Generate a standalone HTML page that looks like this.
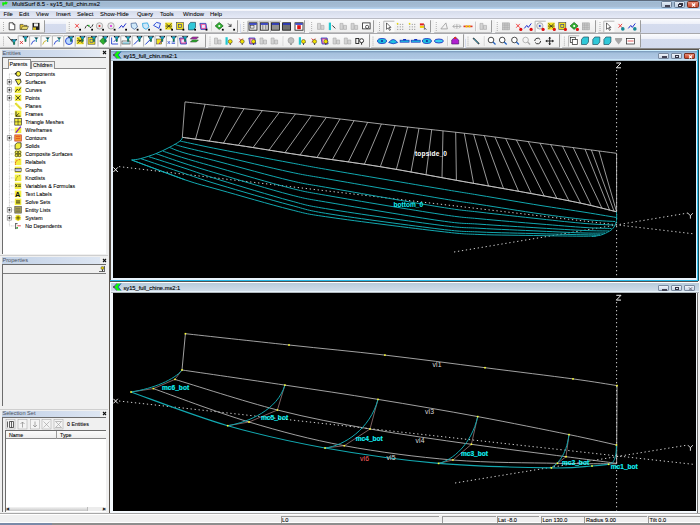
<!DOCTYPE html>
<html><head><meta charset="utf-8">
<style>
*{box-sizing:border-box}
html,body{margin:0;padding:0}
body{width:700px;height:525px;overflow:hidden;position:relative;background:#f0f0f0;font-family:"Liberation Sans",sans-serif;color:#000}
.a{position:absolute}
.t{position:absolute;white-space:nowrap;line-height:1}
</style></head><body>
<!-- title bar -->
<div class="a" style="left:0;top:0;width:700px;height:9px;background:linear-gradient(#5d6b7e 0,#5d6b7e 1px,#a9c6e3 1px,#9fb7cf 2px,#a6bdd6 7px,#b4d2ef 8px,#b4d2ef 9px)"></div>
<svg class="a" style="left:0;top:0" width="10" height="8" viewBox="0 0 10 8"><path d="M1.9,2.1 L5,2.1 L5.2,0.9 L8.2,2.5 L6.6,4.7 L4.2,4.7 L3.5,6.5 L2.1,5.6 Z" fill="#08f008" stroke="#e0a0f0" stroke-width="0.45"/></svg>
<div class="t" style="left:12px;top:1.6px;font-size:5.87px;color:#000;-webkit-text-stroke:0.07px #000">MultiSurf 8.5 - sy15_full_chin.ms2</div>
<!-- window buttons -->
<div class="a" style="left:661px;top:1px;width:11px;height:6.5px;border:0.6px solid #6a7e96;border-radius:1.5px;background:linear-gradient(#e4ecf6,#bccde0)"><div class="a" style="left:3px;top:3.4px;width:5px;height:2px;background:#fff;border:0.45px solid #445"></div></div>
<div class="a" style="left:674px;top:1px;width:11px;height:6.5px;border:0.6px solid #6a7e96;border-radius:1.5px;background:linear-gradient(#e4ecf6,#bccde0)"><div class="a" style="left:4px;top:0.8px;width:4px;height:3px;border:0.6px solid #334;background:#f4f8fc"></div><div class="a" style="left:2.8px;top:2.3px;width:4px;height:3px;border:0.6px solid #334;background:#f4f8fc"></div></div>
<div class="a" style="left:687px;top:1px;width:11.5px;height:6.5px;border:0.6px solid #7a3020;border-radius:1.5px;background:linear-gradient(#e8907a,#c8452a)"><svg class="a" style="left:0;top:0" width="11" height="6.5" viewBox="0 0 11 6.5"><path d="M4,1.5 L7.2,4.7 M7.2,1.5 L4,4.7" stroke="#fff" stroke-width="1.2"/></svg></div>
<!-- menu bar -->
<div class="a" style="left:0;top:9px;width:700px;height:10px;background:linear-gradient(#fafbff 0,#f7f8fd 1.4px,#d6dcec 2.2px,#dce2f0 5px,#e4e8f6 8.4px,#e8ebf8 9px,#b8bac2 9.1px)"></div>
<div class="t" style="top:12.3px;font-size:5.9px;color:#000;-webkit-text-stroke:0.05px #000;left:3.4px">File</div>
<div class="t" style="top:12.3px;font-size:5.9px;color:#000;-webkit-text-stroke:0.05px #000;left:19px">Edit</div>
<div class="t" style="top:12.3px;font-size:5.9px;color:#000;-webkit-text-stroke:0.05px #000;left:36px">View</div>
<div class="t" style="top:12.3px;font-size:5.9px;color:#000;-webkit-text-stroke:0.05px #000;left:56px">Insert</div>
<div class="t" style="top:12.3px;font-size:5.9px;color:#000;-webkit-text-stroke:0.05px #000;left:77px">Select</div>
<div class="t" style="top:12.3px;font-size:5.9px;color:#000;-webkit-text-stroke:0.05px #000;left:100px">Show-Hide</div>
<div class="t" style="top:12.3px;font-size:5.9px;color:#000;-webkit-text-stroke:0.05px #000;left:137px">Query</div>
<div class="t" style="top:12.3px;font-size:5.9px;color:#000;-webkit-text-stroke:0.05px #000;left:160px">Tools</div>
<div class="t" style="top:12.3px;font-size:5.9px;color:#000;-webkit-text-stroke:0.05px #000;left:183px">Window</div>
<div class="t" style="top:12.3px;font-size:5.9px;color:#000;-webkit-text-stroke:0.05px #000;left:210px">Help</div>
<!-- rebar -->
<div class="a" style="left:0;top:19px;width:700px;height:14.6px;background:linear-gradient(#fbfcfe 0,#eff1f9 4.5px,#d5dcee 5.2px,#d3daed 14px,#a8a8ac 14px)"></div><div class="a" style="left:0;top:33.6px;width:700px;height:14.4px;background:linear-gradient(#fbfcfe 0,#eff1f9 4.5px,#d5dcee 5.2px,#d3daed 14px)"></div>
<div class="a" style="left:0;top:48px;width:700px;height:1px;background:#8a8a8a"></div>
<div class="a" style="left:0px;top:19.6px;width:44.8px;height:13.600000000000001px;background:linear-gradient(#fafafa,#f4f4f4 50%,#eeeeee);border-right:0.9px solid #9c9c9c;border-bottom:0.7px solid #c0c0c0;border-radius:1px"></div>
<div class="a" style="left:237.8px;top:19.6px;width:2.6999999999999886px;height:13.600000000000001px;background:#f2f2f2"></div>
<div class="a" style="left:66px;top:19.6px;width:171.8px;height:13.600000000000001px;background:linear-gradient(#fafafa,#f4f4f4 50%,#eeeeee);border-right:0.9px solid #9c9c9c;border-bottom:0.7px solid #c0c0c0;border-radius:1px"></div>
<div class="a" style="left:305px;top:19.6px;width:3.5px;height:13.600000000000001px;background:#f2f2f2"></div>
<div class="a" style="left:240.5px;top:19.6px;width:64.5px;height:13.600000000000001px;background:linear-gradient(#fafafa,#f4f4f4 50%,#eeeeee);border-right:0.9px solid #9c9c9c;border-bottom:0.7px solid #c0c0c0;border-radius:1px"></div>
<div class="a" style="left:374px;top:19.6px;width:2.5px;height:13.600000000000001px;background:#f2f2f2"></div>
<div class="a" style="left:308.5px;top:19.6px;width:65.5px;height:13.600000000000001px;background:linear-gradient(#fafafa,#f4f4f4 50%,#eeeeee);border-right:0.9px solid #9c9c9c;border-bottom:0.7px solid #c0c0c0;border-radius:1px"></div>
<div class="a" style="left:431px;top:19.6px;width:2.5px;height:13.600000000000001px;background:#f2f2f2"></div>
<div class="a" style="left:376.5px;top:19.6px;width:54.5px;height:13.600000000000001px;background:linear-gradient(#fafafa,#f4f4f4 50%,#eeeeee);border-right:0.9px solid #9c9c9c;border-bottom:0.7px solid #c0c0c0;border-radius:1px"></div>
<div class="a" style="left:491.5px;top:19.6px;width:3.0px;height:13.600000000000001px;background:#f2f2f2"></div>
<div class="a" style="left:433.5px;top:19.6px;width:58.0px;height:13.600000000000001px;background:linear-gradient(#fafafa,#f4f4f4 50%,#eeeeee);border-right:0.9px solid #9c9c9c;border-bottom:0.7px solid #c0c0c0;border-radius:1px"></div>
<div class="a" style="left:595.5px;top:19.6px;width:2.0px;height:13.600000000000001px;background:#f2f2f2"></div>
<div class="a" style="left:494.5px;top:19.6px;width:101.0px;height:13.600000000000001px;background:linear-gradient(#fafafa,#f4f4f4 50%,#eeeeee);border-right:0.9px solid #9c9c9c;border-bottom:0.7px solid #c0c0c0;border-radius:1px"></div>
<div class="a" style="left:597.5px;top:19.6px;width:43.0px;height:13.600000000000001px;background:linear-gradient(#fafafa,#f4f4f4 50%,#eeeeee);border-right:0.9px solid #9c9c9c;border-bottom:0.7px solid #c0c0c0;border-radius:1px"></div>
<div class="a" style="left:206px;top:34.2px;width:1.5px;height:13.599999999999994px;background:#f2f2f2"></div>
<div class="a" style="left:0px;top:34.2px;width:206px;height:13.599999999999994px;background:linear-gradient(#fafafa,#f4f4f4 50%,#eeeeee);border-right:0.9px solid #9c9c9c;border-bottom:0.7px solid #c0c0c0;border-radius:1px"></div>
<div class="a" style="left:369.5px;top:34.2px;width:1.0px;height:13.599999999999994px;background:#f2f2f2"></div>
<div class="a" style="left:207.5px;top:34.2px;width:162.0px;height:13.599999999999994px;background:linear-gradient(#fafafa,#f4f4f4 50%,#eeeeee);border-right:0.9px solid #9c9c9c;border-bottom:0.7px solid #c0c0c0;border-radius:1px"></div>
<div class="a" style="left:463.8px;top:34.2px;width:1.6999999999999886px;height:13.599999999999994px;background:#f2f2f2"></div>
<div class="a" style="left:370.5px;top:34.2px;width:93.30000000000001px;height:13.599999999999994px;background:linear-gradient(#fafafa,#f4f4f4 50%,#eeeeee);border-right:0.9px solid #9c9c9c;border-bottom:0.7px solid #c0c0c0;border-radius:1px"></div>
<div class="a" style="left:559.5px;top:34.2px;width:2.0px;height:13.599999999999994px;background:#f2f2f2"></div>
<div class="a" style="left:465.5px;top:34.2px;width:94.0px;height:13.599999999999994px;background:linear-gradient(#fafafa,#f4f4f4 50%,#eeeeee);border-right:0.9px solid #9c9c9c;border-bottom:0.7px solid #c0c0c0;border-radius:1px"></div>
<div class="a" style="left:561.5px;top:34.2px;width:79.0px;height:13.599999999999994px;background:linear-gradient(#fafafa,#f4f4f4 50%,#eeeeee);border-right:0.9px solid #9c9c9c;border-bottom:0.7px solid #c0c0c0;border-radius:1px"></div>
<svg class="a" style="left:0;top:0" width="700" height="49" viewBox="0 0 700 49" font-family="Liberation Sans"><rect x="3.0" y="22.1" width="0.8" height="0.8" fill="#8a8a8a"/><rect x="3.0" y="24.1" width="0.8" height="0.8" fill="#8a8a8a"/><rect x="3.0" y="26.1" width="0.8" height="0.8" fill="#8a8a8a"/><rect x="3.0" y="28.1" width="0.8" height="0.8" fill="#8a8a8a"/><rect x="3.0" y="30.1" width="0.8" height="0.8" fill="#8a8a8a"/><rect x="68.8" y="22.1" width="0.8" height="0.8" fill="#8a8a8a"/><rect x="68.8" y="24.1" width="0.8" height="0.8" fill="#8a8a8a"/><rect x="68.8" y="26.1" width="0.8" height="0.8" fill="#8a8a8a"/><rect x="68.8" y="28.1" width="0.8" height="0.8" fill="#8a8a8a"/><rect x="68.8" y="30.1" width="0.8" height="0.8" fill="#8a8a8a"/><rect x="243.4" y="22.1" width="0.8" height="0.8" fill="#8a8a8a"/><rect x="243.4" y="24.1" width="0.8" height="0.8" fill="#8a8a8a"/><rect x="243.4" y="26.1" width="0.8" height="0.8" fill="#8a8a8a"/><rect x="243.4" y="28.1" width="0.8" height="0.8" fill="#8a8a8a"/><rect x="243.4" y="30.1" width="0.8" height="0.8" fill="#8a8a8a"/><rect x="311.3" y="22.1" width="0.8" height="0.8" fill="#8a8a8a"/><rect x="311.3" y="24.1" width="0.8" height="0.8" fill="#8a8a8a"/><rect x="311.3" y="26.1" width="0.8" height="0.8" fill="#8a8a8a"/><rect x="311.3" y="28.1" width="0.8" height="0.8" fill="#8a8a8a"/><rect x="311.3" y="30.1" width="0.8" height="0.8" fill="#8a8a8a"/><rect x="379.1" y="22.1" width="0.8" height="0.8" fill="#8a8a8a"/><rect x="379.1" y="24.1" width="0.8" height="0.8" fill="#8a8a8a"/><rect x="379.1" y="26.1" width="0.8" height="0.8" fill="#8a8a8a"/><rect x="379.1" y="28.1" width="0.8" height="0.8" fill="#8a8a8a"/><rect x="379.1" y="30.1" width="0.8" height="0.8" fill="#8a8a8a"/><rect x="435.8" y="22.1" width="0.8" height="0.8" fill="#8a8a8a"/><rect x="435.8" y="24.1" width="0.8" height="0.8" fill="#8a8a8a"/><rect x="435.8" y="26.1" width="0.8" height="0.8" fill="#8a8a8a"/><rect x="435.8" y="28.1" width="0.8" height="0.8" fill="#8a8a8a"/><rect x="435.8" y="30.1" width="0.8" height="0.8" fill="#8a8a8a"/><rect x="496.8" y="22.1" width="0.8" height="0.8" fill="#8a8a8a"/><rect x="496.8" y="24.1" width="0.8" height="0.8" fill="#8a8a8a"/><rect x="496.8" y="26.1" width="0.8" height="0.8" fill="#8a8a8a"/><rect x="496.8" y="28.1" width="0.8" height="0.8" fill="#8a8a8a"/><rect x="496.8" y="30.1" width="0.8" height="0.8" fill="#8a8a8a"/><rect x="599.6" y="22.1" width="0.8" height="0.8" fill="#8a8a8a"/><rect x="599.6" y="24.1" width="0.8" height="0.8" fill="#8a8a8a"/><rect x="599.6" y="26.1" width="0.8" height="0.8" fill="#8a8a8a"/><rect x="599.6" y="28.1" width="0.8" height="0.8" fill="#8a8a8a"/><rect x="599.6" y="30.1" width="0.8" height="0.8" fill="#8a8a8a"/><rect x="3.0" y="36.7" width="0.8" height="0.8" fill="#8a8a8a"/><rect x="3.0" y="38.7" width="0.8" height="0.8" fill="#8a8a8a"/><rect x="3.0" y="40.7" width="0.8" height="0.8" fill="#8a8a8a"/><rect x="3.0" y="42.7" width="0.8" height="0.8" fill="#8a8a8a"/><rect x="3.0" y="44.7" width="0.8" height="0.8" fill="#8a8a8a"/><rect x="209.6" y="36.7" width="0.8" height="0.8" fill="#8a8a8a"/><rect x="209.6" y="38.7" width="0.8" height="0.8" fill="#8a8a8a"/><rect x="209.6" y="40.7" width="0.8" height="0.8" fill="#8a8a8a"/><rect x="209.6" y="42.7" width="0.8" height="0.8" fill="#8a8a8a"/><rect x="209.6" y="44.7" width="0.8" height="0.8" fill="#8a8a8a"/><rect x="372.6" y="36.7" width="0.8" height="0.8" fill="#8a8a8a"/><rect x="372.6" y="38.7" width="0.8" height="0.8" fill="#8a8a8a"/><rect x="372.6" y="40.7" width="0.8" height="0.8" fill="#8a8a8a"/><rect x="372.6" y="42.7" width="0.8" height="0.8" fill="#8a8a8a"/><rect x="372.6" y="44.7" width="0.8" height="0.8" fill="#8a8a8a"/><rect x="467.6" y="36.7" width="0.8" height="0.8" fill="#8a8a8a"/><rect x="467.6" y="38.7" width="0.8" height="0.8" fill="#8a8a8a"/><rect x="467.6" y="40.7" width="0.8" height="0.8" fill="#8a8a8a"/><rect x="467.6" y="42.7" width="0.8" height="0.8" fill="#8a8a8a"/><rect x="467.6" y="44.7" width="0.8" height="0.8" fill="#8a8a8a"/><rect x="563.9" y="36.7" width="0.8" height="0.8" fill="#8a8a8a"/><rect x="563.9" y="38.7" width="0.8" height="0.8" fill="#8a8a8a"/><rect x="563.9" y="40.7" width="0.8" height="0.8" fill="#8a8a8a"/><rect x="563.9" y="42.7" width="0.8" height="0.8" fill="#8a8a8a"/><rect x="563.9" y="44.7" width="0.8" height="0.8" fill="#8a8a8a"/><path d="M9.2,22.799999999999997 h3.8 l1.8,1.8 v5.2 h-5.6 z" fill="#fff" stroke="#222" stroke-width="0.8"/><path d="M13,22.799999999999997 v1.8 h1.8" fill="none" stroke="#222" stroke-width="0.6"/><path d="M20,24.4 h3 l1,1 h3 v4 h-7 z" fill="#e0c030" stroke="#333" stroke-width="0.6"/><path d="M21,29.4 l1.5,-3 h6 l-1.5,3 z" fill="#f0e070" stroke="#333" stroke-width="0.5"/><rect x="32.5" y="22.9" width="7" height="7" fill="#222"/><rect x="34" y="23.4" width="4" height="3" fill="#eee"/><rect x="33" y="27.4" width="3" height="2.5" fill="#d8c020"/><path d="M75.2,23.9 l3.6,3.8 M78.8,23.9 l-3.6,3.8" stroke="#f03030" stroke-width="0.9"/><rect x="79.2" y="28.8" width="1.8" height="1.8" fill="#000"/><path d="M85,28.4 q2,-5 4,-2 t4,-2" fill="none" stroke="#222" stroke-width="0.9"/><rect x="88" y="24.9" width="1.5" height="1.5" fill="#20c020"/><rect x="91.2" y="28.8" width="1.8" height="1.8" fill="#000"/><circle cx="99.5" cy="25.9" r="3.2" fill="#e8e8e8" stroke="#888" stroke-width="0.6"/><circle cx="99.5" cy="25.9" r="1" fill="#e02020"/><rect x="102.2" y="28.8" width="1.8" height="1.8" fill="#000"/><circle cx="111.0" cy="25.9" r="3.2" fill="#e8e8e8" stroke="#888" stroke-width="0.6"/><circle cx="111.0" cy="25.9" r="1" fill="#e020e0"/><rect x="113.7" y="28.8" width="1.8" height="1.8" fill="#000"/><path d="M119,28.4 l2.5,-3 l1.5,2 l3,-4" fill="none" stroke="#2030d0" stroke-width="1"/><rect x="125.2" y="28.8" width="1.8" height="1.8" fill="#000"/><path d="M131.0,23.4 l5,-0.5 l1.5,4 l-3,2.5 l-3,-2 z" fill="#cfe8f8" stroke="#5070a0" stroke-width="0.8"/><rect x="136.7" y="28.8" width="1.8" height="1.8" fill="#000"/><path d="M142.5,23.4 l5,-0.5 l1.5,4 l-3,2.5 l-3,-2 z" fill="#cfe8f8" stroke="#20a0e0" stroke-width="0.8"/><rect x="148.2" y="28.8" width="1.8" height="1.8" fill="#000"/><path d="M153.5,25.4 l3,-3 l4,1 l-1.5,5 z" fill="#e8f0ff" stroke="#2040d0" stroke-width="0.9"/><rect x="159.7" y="28.8" width="1.8" height="1.8" fill="#000"/><rect x="165.2" y="22.599999999999998" width="7" height="7" fill="#f0e020"/><path d="M166,23.4 l5.5,5.5 M171.5,23.4 l-5.5,5.5 M165.5,26.099999999999998 h6.5" stroke="#222" stroke-width="0.7"/><rect x="171.2" y="28.8" width="1.8" height="1.8" fill="#000"/><rect x="176.5" y="22.599999999999998" width="7" height="7" fill="#f0e020" stroke="#444" stroke-width="0.6"/><rect x="178.5" y="24.599999999999998" width="3" height="3" fill="none" stroke="#2030a0" stroke-width="0.6"/><rect x="182.5" y="28.8" width="1.8" height="1.8" fill="#000"/><path d="M188.5,24.9 l2,-2.5 h5 v5 l-2,2.5 h-5 z" fill="#30c8d8" stroke="#205060" stroke-width="0.7"/><rect x="194.2" y="28.8" width="1.8" height="1.8" fill="#000"/><path d="M199.9,23.4 h6 l1,6 h-6 z" fill="#f060a0" stroke="#2040c0" stroke-width="0.8"/><rect x="201.9" y="24.9" width="3" height="3" fill="#e8e8ff"/><rect x="205.6" y="28.8" width="1.8" height="1.8" fill="#000"/><rect x="211.6" y="21.6" width="0.7" height="9.6" fill="#b0b0b0"/><rect x="212.3" y="21.6" width="0.6" height="9.6" fill="#ffffff"/><path d="M219.2,22.4 l4,3.5 l-4,3.5 l-4,-3.5 z" fill="#30b030" stroke="#1a5a1a" stroke-width="0.7"/><rect x="218.39999999999998" y="25.099999999999998" width="1.8" height="1.8" fill="#fff"/><rect x="221.9" y="28.8" width="1.8" height="1.8" fill="#000"/><path d="M228,23.4 l3,3 M231,26.4 h-2.5 M231,26.4 v-2.5" fill="none" stroke="#222" stroke-width="0.8"/><rect x="233.2" y="28.8" width="1.8" height="1.8" fill="#000"/><rect x="247.4" y="20.8" width="11" height="11.2" fill="#fafafa"/><path d="M247.8,32.0 V21.2 H258.4" fill="none" stroke="#b4b4b4" stroke-width="1"/><rect x="249" y="22.799999999999997" width="8" height="7.4" fill="#e8e8e8" stroke="#111" stroke-width="0.8"/><rect x="249.4" y="23.2" width="7.2" height="1.6" fill="#2030c0"/><rect x="250.5" y="25.599999999999998" width="3.5" height="2.5" fill="none" stroke="#222" stroke-width="0.5"/><rect x="258.7" y="20.8" width="11" height="11.2" fill="#fafafa"/><path d="M259.1,32.0 V21.2 H269.7" fill="none" stroke="#b4b4b4" stroke-width="1"/><rect x="260.3" y="22.799999999999997" width="8" height="7.4" fill="#d8d8d8" stroke="#111" stroke-width="0.8"/><rect x="260.7" y="23.2" width="7.2" height="1.6" fill="#2030c0"/><path d="M262.8,25.099999999999998 v4.5 M265.8,25.099999999999998 v4.5" stroke="#444" stroke-width="0.6"/><rect x="269.9" y="20.8" width="11" height="11.2" fill="#fafafa"/><path d="M270.3,32.0 V21.2 H280.9" fill="none" stroke="#b4b4b4" stroke-width="1"/><rect x="271.5" y="22.799999999999997" width="8" height="7.4" fill="#909090" stroke="#111" stroke-width="0.8"/><rect x="271.9" y="23.2" width="7.2" height="1.6" fill="#2030c0"/><rect x="282.6" y="22.799999999999997" width="8" height="7.4" fill="#707070" stroke="#111" stroke-width="0.8"/><rect x="283.0" y="23.2" width="7.2" height="1.6" fill="#2030c0"/><rect x="295" y="22.799999999999997" width="8" height="7.4" fill="#fff" stroke="#111" stroke-width="0.8"/><rect x="295.4" y="23.2" width="7.2" height="1.6" fill="#2030c0"/><rect x="297.2" y="25.2" width="3.6" height="4" fill="#e01010"/><path d="M317.5,23.4 h3 v6 h-3 z M321,25.4 h3 v4 h-3 z" fill="#d4d4d4" stroke="#a8a8a8" stroke-width="0.6"/><rect x="328.8" y="22.599999999999998" width="2.2" height="7.5" fill="#20c8d0"/><path d="M332.3,25.4 l3,3" stroke="#222" stroke-width="0.9"/><path d="M340.0,23.4 h3 v6 h-3 z M343.5,25.4 h3 v4 h-3 z" fill="#d4d4d4" stroke="#a8a8a8" stroke-width="0.6"/><path d="M351.1,23.4 h3 v6 h-3 z M354.6,25.4 h3 v4 h-3 z" fill="#d4d4d4" stroke="#a8a8a8" stroke-width="0.6"/><rect x="362.6" y="22.9" width="7.5" height="6" fill="#fff" stroke="#222" stroke-width="0.8"/><circle cx="367.1" cy="26.9" r="1.6" fill="none" stroke="#222" stroke-width="0.7"/><rect x="383.4" y="20.8" width="11" height="11.2" fill="#fafafa"/><path d="M383.8,32.0 V21.2 H394.4" fill="none" stroke="#b4b4b4" stroke-width="1"/><path d="M386.5,22.9 v6.5 l1.5,-1.5 l1.5,2.5 l1,-0.5 l-1.5,-2.5 h2 z" fill="#fff" stroke="#111" stroke-width="0.6"/><rect x="397.3" y="23.9" width="0.9" height="0.9" fill="#777"/><rect x="397.3" y="26.4" width="0.9" height="0.9" fill="#777"/><rect x="397.3" y="28.9" width="0.9" height="0.9" fill="#777"/><rect x="399.8" y="23.9" width="0.9" height="0.9" fill="#777"/><rect x="399.8" y="26.4" width="0.9" height="0.9" fill="#777"/><rect x="399.8" y="28.9" width="0.9" height="0.9" fill="#777"/><rect x="402.3" y="23.9" width="0.9" height="0.9" fill="#777"/><rect x="402.3" y="26.4" width="0.9" height="0.9" fill="#777"/><rect x="402.3" y="28.9" width="0.9" height="0.9" fill="#777"/><rect x="396.8" y="22.9" width="1.5" height="1.5" fill="#f0e000"/><rect x="409.3" y="23.9" width="0.9" height="0.9" fill="#777"/><rect x="409.3" y="26.4" width="0.9" height="0.9" fill="#777"/><rect x="409.3" y="28.9" width="0.9" height="0.9" fill="#777"/><rect x="411.8" y="23.9" width="0.9" height="0.9" fill="#777"/><rect x="411.8" y="26.4" width="0.9" height="0.9" fill="#777"/><rect x="411.8" y="28.9" width="0.9" height="0.9" fill="#777"/><rect x="414.3" y="23.9" width="0.9" height="0.9" fill="#777"/><rect x="414.3" y="26.4" width="0.9" height="0.9" fill="#777"/><rect x="414.3" y="28.9" width="0.9" height="0.9" fill="#777"/><rect x="408.8" y="22.9" width="1.5" height="1.5" fill="#f0e000"/><rect x="419.9" y="23.4" width="4" height="2" fill="#e02020"/><rect x="419.9" y="25.9" width="4" height="2" fill="#f0d000"/><path d="M424.4,24.4 v5 l1,-1 l1,1.5" fill="none" stroke="#222" stroke-width="0.6"/><path d="M440.9,28.9 l5,-6 l1.5,6 z" fill="none" stroke="#9a9a9a" stroke-width="0.8"/><path d="M452.9,26.4 h8 M452.9,26.4 l2,-2 M452.9,26.4 l2,2 M460.9,26.4 l-2,-2 M460.9,26.4 l-2,2 M456.9,23.9 v5" stroke="#9a9a9a" stroke-width="0.7" fill="none"/><rect x="463.5" y="25.599999999999998" width="9" height="1.6" fill="#e03030"/><circle cx="466.5" cy="26.4" r="1.1" fill="#f0d000"/><circle cx="469.5" cy="26.4" r="1.1" fill="#f0d000"/><rect x="475.4" y="21.6" width="0.7" height="9.6" fill="#b0b0b0"/><rect x="476.1" y="21.6" width="0.6" height="9.6" fill="#ffffff"/><path d="M480.0,23.4 h3 v6 h-3 z M483.5,25.4 h3 v4 h-3 z" fill="#d4d4d4" stroke="#a8a8a8" stroke-width="0.6"/><rect x="502.5" y="22.9" width="7" height="7" fill="#c8c8c8" stroke="#9a9a9a" stroke-width="0.5"/><path d="M504.8,22.9 v7 M507.2,22.9 v7 M502.5,25.2 h7 M502.5,27.599999999999998 h7" stroke="#a0a0a0" stroke-width="0.4"/><path d="M516.2,23.9 l3.6,3.8 M519.8,23.9 l-3.6,3.8" stroke="#f03030" stroke-width="0.9"/><circle cx="520.8" cy="29.4" r="1.6" fill="#e01010"/><path d="M524.3,28.4 l2.5,-3 l1.5,2 l3,-4" fill="none" stroke="#2030d0" stroke-width="1"/><circle cx="531.0999999999999" cy="29.4" r="1.6" fill="#e01010"/><rect x="534.7" y="20.8" width="11" height="11.2" fill="#fafafa"/><path d="M535.1,32.0 V21.2 H545.7" fill="none" stroke="#b4b4b4" stroke-width="1"/><circle cx="539.8" cy="25.9" r="3.2" fill="#e8e8e8" stroke="#888" stroke-width="0.6"/><circle cx="539.8" cy="25.9" r="1" fill="#2040d0"/><circle cx="543.0999999999999" cy="29.4" r="1.6" fill="#e01010"/><rect x="547.7" y="22.599999999999998" width="7" height="7" fill="#f0e020"/><path d="M548.5,23.4 l5.5,5.5 M554.0,23.4 l-5.5,5.5 M548.0,26.099999999999998 h6.5" stroke="#222" stroke-width="0.7"/><circle cx="554.3" cy="29.4" r="1.6" fill="#e01010"/><rect x="558.8000000000001" y="22.599999999999998" width="7" height="7" fill="#f0e020" stroke="#444" stroke-width="0.6"/><rect x="560.8000000000001" y="24.599999999999998" width="3" height="3" fill="none" stroke="#2030a0" stroke-width="0.6"/><circle cx="565.4" cy="29.4" r="1.6" fill="#e01010"/><path d="M574.1,22.4 l4,3.5 l-4,3.5 l-4,-3.5 z" fill="#30b030" stroke="#1a5a1a" stroke-width="0.7"/><rect x="573.3000000000001" y="25.099999999999998" width="1.8" height="1.8" fill="#fff"/><circle cx="577.4" cy="29.4" r="1.6" fill="#e01010"/><rect x="582.3" y="22.9" width="7" height="7" fill="#c8c8c8" stroke="#9a9a9a" stroke-width="0.5"/><path d="M584.5999999999999,22.9 v7 M587.0,22.9 v7 M582.3,25.2 h7 M582.3,27.599999999999998 h7" stroke="#a0a0a0" stroke-width="0.4"/><rect x="603.4" y="20.8" width="11" height="11.2" fill="#fafafa"/><path d="M603.8,32.0 V21.2 H614.4" fill="none" stroke="#b4b4b4" stroke-width="1"/><path d="M606.5,22.9 v6.5 l1.5,-1.5 l1.5,2.5 l1,-0.5 l-1.5,-2.5 h2 z" fill="#fff" stroke="#111" stroke-width="0.6"/><path d="M618.5,23.9 l3.6,3.8 M622.0999999999999,23.9 l-3.6,3.8" stroke="#f03030" stroke-width="0.9"/><circle cx="622.8" cy="28.9" r="1.8" fill="#188898"/><path d="M628.3,28.4 l2.5,-3 l1.5,2 l3,-4" fill="none" stroke="#2030d0" stroke-width="1"/><circle cx="634.8" cy="28.9" r="1.8" fill="#188898"/><path d="M8,36.5 l5,6" stroke="#222" stroke-width="0.8"/><path d="M11.8,39.6 h4.6 l-1.7,2.4 v2.4 h-1.2 v-2.4 z" fill="#10b0c8" stroke="#102040" stroke-width="0.45"/><rect x="13.5" y="42.0" width="1.2" height="2.4" fill="#108040"/><circle cx="11.9" cy="39.7" r="0.6" fill="#000"/><circle cx="16.3" cy="39.7" r="0.6" fill="#000"/><rect x="17.8" y="35.4" width="11" height="11.2" fill="#fafafa"/><path d="M18.2,46.6 V35.8 H28.8" fill="none" stroke="#b4b4b4" stroke-width="1"/><path d="M19.9,41.0 l3,3 M22.9,41.0 l-3,3" stroke="#e02020" stroke-width="0.8"/><path d="M23.2,36.6 h4.6 l-1.7,2.4 v2.4 h-1.2 v-2.4 z" fill="#10b0c8" stroke="#102040" stroke-width="0.45"/><rect x="24.9" y="39.0" width="1.2" height="2.4" fill="#108040"/><circle cx="23.299999999999997" cy="36.7" r="0.6" fill="#000"/><circle cx="27.7" cy="36.7" r="0.6" fill="#000"/><rect x="29.2" y="35.4" width="11" height="11.2" fill="#fafafa"/><path d="M29.6,46.6 V35.8 H40.2" fill="none" stroke="#b4b4b4" stroke-width="1"/><path d="M31.299999999999997,44.5 q1,-4 4,-4" fill="none" stroke="#2040d0" stroke-width="0.9"/><path d="M34.8,37.5 l1.5,2 l1.5,-2 M36.3,39.5 v2.5" stroke="#188898" stroke-width="1"/><rect x="40.6" y="35.4" width="11" height="11.2" fill="#fafafa"/><path d="M41.0,46.6 V35.8 H51.6" fill="none" stroke="#b4b4b4" stroke-width="1"/><path d="M42.7,44.5 q1,-4 4,-4" fill="none" stroke="#c0b020" stroke-width="0.9"/><path d="M46.2,37.5 l1.5,2 l1.5,-2 M47.7,39.5 v2.5" stroke="#188898" stroke-width="1"/><rect x="52.0" y="35.4" width="11" height="11.2" fill="#fafafa"/><path d="M52.4,46.6 V35.8 H63.0" fill="none" stroke="#b4b4b4" stroke-width="1"/><path d="M54.1,44.5 q1,-4 4,-4" fill="none" stroke="#2040d0" stroke-width="0.9"/><path d="M57.6,37.5 l1.5,2 l1.5,-2 M59.1,39.5 v2.5" stroke="#188898" stroke-width="1"/><rect x="63.4" y="35.4" width="11" height="11.2" fill="#fafafa"/><path d="M63.8,46.6 V35.8 H74.4" fill="none" stroke="#b4b4b4" stroke-width="1"/><circle cx="69" cy="41.0" r="3.5" fill="#b8d8ff" stroke="#2040d0" stroke-width="0.9"/><path d="M68.8,36.6 h4.6 l-1.7,2.4 v2.4 h-1.2 v-2.4 z" fill="#10b0c8" stroke="#102040" stroke-width="0.45"/><rect x="70.5" y="39.0" width="1.2" height="2.4" fill="#108040"/><circle cx="68.9" cy="36.7" r="0.6" fill="#000"/><circle cx="73.3" cy="36.7" r="0.6" fill="#000"/><rect x="74.8" y="35.4" width="11" height="11.2" fill="#fafafa"/><path d="M75.2,46.6 V35.8 H85.8" fill="none" stroke="#b4b4b4" stroke-width="1"/><rect x="76.60000000000001" y="37.2" width="7" height="7" fill="#f0e020"/><path d="M77.4,38.0 l5.5,5.5 M82.9,38.0 l-5.5,5.5 M76.9,40.7 h6.5" stroke="#222" stroke-width="0.7"/><path d="M80.2,36.6 h4.6 l-1.7,2.4 v2.4 h-1.2 v-2.4 z" fill="#10b0c8" stroke="#102040" stroke-width="0.45"/><rect x="81.9" y="39.0" width="1.2" height="2.4" fill="#108040"/><circle cx="80.30000000000001" cy="36.7" r="0.6" fill="#000"/><circle cx="84.7" cy="36.7" r="0.6" fill="#000"/><rect x="86.2" y="35.4" width="11" height="11.2" fill="#fafafa"/><path d="M86.6,46.6 V35.8 H97.2" fill="none" stroke="#b4b4b4" stroke-width="1"/><rect x="88.0" y="37.2" width="7" height="7" fill="#f0e020" stroke="#444" stroke-width="0.6"/><rect x="90.0" y="39.2" width="3" height="3" fill="none" stroke="#2030a0" stroke-width="0.6"/><path d="M91.6,36.6 h4.6 l-1.7,2.4 v2.4 h-1.2 v-2.4 z" fill="#10b0c8" stroke="#102040" stroke-width="0.45"/><rect x="93.3" y="39.0" width="1.2" height="2.4" fill="#108040"/><circle cx="91.7" cy="36.7" r="0.6" fill="#000"/><circle cx="96.1" cy="36.7" r="0.6" fill="#000"/><rect x="97.6" y="35.4" width="11" height="11.2" fill="#fafafa"/><path d="M98.0,46.6 V35.8 H108.6" fill="none" stroke="#b4b4b4" stroke-width="1"/><path d="M103.2,37.5 l3.5,3.5 l-3.5,3.5 l-3.5,-3.5 z" fill="#30b030" stroke="#1a5a1a" stroke-width="0.6"/><path d="M103.0,36.6 h4.6 l-1.7,2.4 v2.4 h-1.2 v-2.4 z" fill="#10b0c8" stroke="#102040" stroke-width="0.45"/><rect x="104.7" y="39.0" width="1.2" height="2.4" fill="#108040"/><circle cx="103.10000000000001" cy="36.7" r="0.6" fill="#000"/><circle cx="107.5" cy="36.7" r="0.6" fill="#000"/><rect x="109.0" y="35.4" width="11" height="11.2" fill="#fafafa"/><path d="M109.4,46.6 V35.8 H120.0" fill="none" stroke="#b4b4b4" stroke-width="1"/><path d="M111.6,37.5 v6.5 h6.5" fill="none" stroke="#2040d0" stroke-width="0.9"/><path d="M113.6,42.0 l4,-4" stroke="#2040d0" stroke-width="0.8"/><path d="M114.39999999999999,36.6 h4.6 l-1.7,2.4 v2.4 h-1.2 v-2.4 z" fill="#10b0c8" stroke="#102040" stroke-width="0.45"/><rect x="116.1" y="39.0" width="1.2" height="2.4" fill="#108040"/><circle cx="114.5" cy="36.7" r="0.6" fill="#000"/><circle cx="118.89999999999999" cy="36.7" r="0.6" fill="#000"/><rect x="120.4" y="35.4" width="11" height="11.2" fill="#fafafa"/><path d="M120.8,46.6 V35.8 H131.4" fill="none" stroke="#b4b4b4" stroke-width="1"/><rect x="122" y="41.0" width="8" height="3" fill="#fff" stroke="#333" stroke-width="0.6"/><path d="M123,43.0 h6" stroke="#20a0c0" stroke-width="0.8"/><path d="M125.8,36.6 h4.6 l-1.7,2.4 v2.4 h-1.2 v-2.4 z" fill="#10b0c8" stroke="#102040" stroke-width="0.45"/><rect x="127.5" y="39.0" width="1.2" height="2.4" fill="#108040"/><circle cx="125.9" cy="36.7" r="0.6" fill="#000"/><circle cx="130.3" cy="36.7" r="0.6" fill="#000"/><rect x="131.8" y="35.4" width="11" height="11.2" fill="#fafafa"/><path d="M132.2,46.6 V35.8 H142.8" fill="none" stroke="#b4b4b4" stroke-width="1"/><path d="M133.9,44.5 l6,-6" stroke="#2040d0" stroke-width="1"/><path d="M137.4,37.5 l1.5,2 l1.5,-2" stroke="#188898" stroke-width="0.9" fill="none"/><path d="M137.20000000000002,36.6 h4.6 l-1.7,2.4 v2.4 h-1.2 v-2.4 z" fill="#10b0c8" stroke="#102040" stroke-width="0.45"/><rect x="138.9" y="39.0" width="1.2" height="2.4" fill="#108040"/><circle cx="137.3" cy="36.7" r="0.6" fill="#000"/><circle cx="141.70000000000002" cy="36.7" r="0.6" fill="#000"/><rect x="143.2" y="35.4" width="11" height="11.2" fill="#fafafa"/><path d="M143.6,46.6 V35.8 H154.2" fill="none" stroke="#b4b4b4" stroke-width="1"/><path d="M145.3,44.5 l6,-6" stroke="#2040d0" stroke-width="1"/><path d="M148.8,37.5 l1.5,2 l1.5,-2" stroke="#188898" stroke-width="0.9" fill="none"/><path d="M148.60000000000002,36.6 h4.6 l-1.7,2.4 v2.4 h-1.2 v-2.4 z" fill="#10b0c8" stroke="#102040" stroke-width="0.45"/><rect x="150.3" y="39.0" width="1.2" height="2.4" fill="#108040"/><circle cx="148.70000000000002" cy="36.7" r="0.6" fill="#000"/><circle cx="153.10000000000002" cy="36.7" r="0.6" fill="#000"/><rect x="154.6" y="35.4" width="11" height="11.2" fill="#fafafa"/><path d="M155.0,46.6 V35.8 H165.6" fill="none" stroke="#b4b4b4" stroke-width="1"/><rect x="156.7" y="39.0" width="5" height="5" fill="#f0e020" stroke="#333" stroke-width="0.5"/><path d="M159.2,44.0 l4,-6" stroke="#8020c0" stroke-width="0.9"/><path d="M160.0,36.6 h4.6 l-1.7,2.4 v2.4 h-1.2 v-2.4 z" fill="#10b0c8" stroke="#102040" stroke-width="0.45"/><rect x="161.7" y="39.0" width="1.2" height="2.4" fill="#108040"/><circle cx="160.1" cy="36.7" r="0.6" fill="#000"/><circle cx="164.5" cy="36.7" r="0.6" fill="#000"/><rect x="166.0" y="35.4" width="11" height="11.2" fill="#fafafa"/><path d="M166.4,46.6 V35.8 H177.0" fill="none" stroke="#b4b4b4" stroke-width="1"/><path d="M167.6,41.0 l2.5,3 M170.1,41.0 l-2.5,3 M171.6,42.0 h3.5 M171.6,43.5 h3.5" stroke="#2040d0" stroke-width="0.7"/><path d="M171.4,36.6 h4.6 l-1.7,2.4 v2.4 h-1.2 v-2.4 z" fill="#10b0c8" stroke="#102040" stroke-width="0.45"/><rect x="173.1" y="39.0" width="1.2" height="2.4" fill="#108040"/><circle cx="171.5" cy="36.7" r="0.6" fill="#000"/><circle cx="175.9" cy="36.7" r="0.6" fill="#000"/><rect x="177.4" y="35.4" width="11" height="11.2" fill="#fafafa"/><path d="M177.8,46.6 V35.8 H188.4" fill="none" stroke="#b4b4b4" stroke-width="1"/><path d="M179.5,38.0 h6 l1,6 h-6 z" fill="#f060a0" stroke="#2040c0" stroke-width="0.8"/><rect x="181.5" y="39.5" width="3" height="3" fill="#e8e8ff"/><path d="M182.8,36.6 h4.6 l-1.7,2.4 v2.4 h-1.2 v-2.4 z" fill="#10b0c8" stroke="#102040" stroke-width="0.45"/><rect x="184.5" y="39.0" width="1.2" height="2.4" fill="#108040"/><circle cx="182.9" cy="36.7" r="0.6" fill="#000"/><circle cx="187.3" cy="36.7" r="0.6" fill="#000"/><path d="M190.4,42.0 h6 l2,-2 h-6 z" fill="#30c030" stroke="#222" stroke-width="0.5"/><path d="M190.4,39.0 h6 l2,-2 h-6 z" fill="#c030c0" stroke="#222" stroke-width="0.5"/><path d="M214.5,38.0 h3 v6 h-3 z M218,40.0 h3 v4 h-3 z" fill="#d4d4d4" stroke="#a8a8a8" stroke-width="0.6"/><rect x="225.5" y="37.2" width="2.2" height="7.5" fill="#20c8d0"/><path d="M229,40.0 l3,3" stroke="#222" stroke-width="0.9"/><circle cx="230.2" cy="41.5" r="2" fill="#f0e000" stroke="#333" stroke-width="0.5"/><rect x="229.7" y="43.4" width="1" height="1.5" fill="#333"/><path d="M239.2,38.5 l3.6,3.8 M242.8,38.5 l-3.6,3.8" stroke="#f03030" stroke-width="0.9"/><circle cx="242.2" cy="41.5" r="2" fill="#f0e000" stroke="#333" stroke-width="0.5"/><rect x="241.7" y="43.4" width="1" height="1.5" fill="#333"/><path d="M248.8,38.0 h6 l1,6 h-6 z" fill="#f060a0" stroke="#2040c0" stroke-width="0.8"/><rect x="250.8" y="39.5" width="3" height="3" fill="#e8e8ff"/><circle cx="253.5" cy="41.5" r="2" fill="#f0e000" stroke="#333" stroke-width="0.5"/><rect x="253.0" y="43.4" width="1" height="1.5" fill="#333"/><path d="M260.0,38.0 h3 v6 h-3 z M263.5,40.0 h3 v4 h-3 z" fill="#d4d4d4" stroke="#a8a8a8" stroke-width="0.6"/><path d="M271.1,38.0 h3 v6 h-3 z M274.6,40.0 h3 v4 h-3 z" fill="#d4d4d4" stroke="#a8a8a8" stroke-width="0.6"/><rect x="282.8" y="36.2" width="0.7" height="9.6" fill="#b0b0b0"/><rect x="283.5" y="36.2" width="0.6" height="9.6" fill="#ffffff"/><circle cx="291" cy="40.5" r="3" fill="#c0c0c0" stroke="#8a8a8a" stroke-width="0.5"/><rect x="290.2" y="43.3" width="1.6" height="1.7" fill="#909090"/><rect x="298.8" y="37.2" width="2.2" height="7.5" fill="#20c8d0"/><path d="M302.3,40.0 l3,3" stroke="#222" stroke-width="0.9"/><circle cx="303.5" cy="41.5" r="2" fill="#f0e000" stroke="#333" stroke-width="0.5"/><rect x="303.0" y="43.4" width="1" height="1.5" fill="#333"/><path d="M311.59999999999997,38.5 l3.6,3.8 M315.2,38.5 l-3.6,3.8" stroke="#f03030" stroke-width="0.9"/><circle cx="314.59999999999997" cy="41.5" r="2" fill="#f0e000" stroke="#333" stroke-width="0.5"/><rect x="314.09999999999997" y="43.4" width="1" height="1.5" fill="#333"/><path d="M321.1,38.0 h6 l1,6 h-6 z" fill="#f060a0" stroke="#2040c0" stroke-width="0.8"/><rect x="323.1" y="39.5" width="3" height="3" fill="#e8e8ff"/><circle cx="325.8" cy="41.5" r="2" fill="#f0e000" stroke="#333" stroke-width="0.5"/><rect x="325.3" y="43.4" width="1" height="1.5" fill="#333"/><path d="M333.1,38.0 h3 v6 h-3 z M336.6,40.0 h3 v4 h-3 z" fill="#d4d4d4" stroke="#a8a8a8" stroke-width="0.6"/><path d="M344.3,38.0 h3 v6 h-3 z M347.8,40.0 h3 v4 h-3 z" fill="#d4d4d4" stroke="#a8a8a8" stroke-width="0.6"/><rect x="355.8" y="38.5" width="3" height="5" fill="none" stroke="#222" stroke-width="0.9"/><circle cx="361.6" cy="40.7" r="2" fill="#fff" stroke="#222" stroke-width="0.9"/><rect x="361.1" y="42.7" width="1" height="2" fill="#222"/><ellipse cx="382" cy="41.0" rx="4.5" ry="2.5" fill="#20c0e0" stroke="#1030c0" stroke-width="0.8"/><circle cx="382" cy="41.0" r="1.1" fill="#1030a0"/><path d="M388.7,42.5 q4.5,-6 9,0 q-4.5,2.5 -9,0 z" fill="#20c0e0" stroke="#1030c0" stroke-width="0.8"/><rect x="400.1" y="40.2" width="9" height="2" fill="#20c0e0" stroke="#1030c0" stroke-width="0.7"/><rect x="403.1" y="39.0" width="3" height="1.3" fill="#1030c0"/><rect x="411.2" y="40.2" width="9" height="2" fill="#20c0e0" stroke="#1030c0" stroke-width="0.7"/><rect x="414.2" y="39.0" width="3" height="1.3" fill="#1030c0"/><ellipse cx="426.9" cy="41.0" rx="4.5" ry="2.5" fill="#20c0e0" stroke="#1030c0" stroke-width="0.8"/><circle cx="426.9" cy="41.0" r="1.1" fill="#1030a0"/><ellipse cx="438.9" cy="41.0" rx="4.5" ry="2" fill="#40d0f0" stroke="#2020c0" stroke-width="0.8"/><rect x="447.1" y="36.2" width="0.7" height="9.6" fill="#b0b0b0"/><rect x="447.8" y="36.2" width="0.6" height="9.6" fill="#ffffff"/><path d="M451.7,44.0 v-4 l3.5,-3 l3.5,3 v4 z" fill="#b020d0" stroke="#401060" stroke-width="0.6"/><rect x="454.2" y="37.0" width="2" height="2" fill="#e03020"/><path d="M473.1,38.0 l6,6" stroke="#222" stroke-width="1.5"/><path d="M473.6,38.5 l5,5" stroke="#40b0d0" stroke-width="0.8"/><rect x="483.9" y="36.2" width="0.7" height="9.6" fill="#b0b0b0"/><rect x="484.6" y="36.2" width="0.6" height="9.6" fill="#ffffff"/><circle cx="491" cy="40.0" r="2.8" fill="#fff" stroke="#222" stroke-width="0.8"/><path d="M493,42.0 l2.5,2.5" stroke="#2060c0" stroke-width="1.2"/><circle cx="502.2" cy="40.0" r="2.8" fill="#fff" stroke="#222" stroke-width="0.8"/><path d="M504.2,42.0 l2.5,2.5" stroke="#2060c0" stroke-width="1.2"/><circle cx="514.4" cy="40.0" r="2.8" fill="#fff" stroke="#222" stroke-width="0.8"/><path d="M516.4,42.0 l2.5,2.5" stroke="#2060c0" stroke-width="1.2"/><circle cx="525.6" cy="40.0" r="2.8" fill="none" stroke="#a8a8a8" stroke-width="0.8"/><path d="M527.6,42.0 l2.5,2.5" stroke="#a8a8a8" stroke-width="1.2"/><path d="M534.7,41.0 a3,3 0 0 1 5.5,-1.5 M540.7,41.0 a3,3 0 0 1 -5.5,1.5" fill="none" stroke="#222" stroke-width="0.9"/><path d="M545.7,41.0 h8 M549.7,37.0 v8" stroke="#222" stroke-width="1"/><path d="M545.7,41.0 l1.5,-1.5 v3 z M553.7,41.0 l-1.5,-1.5 v3 z M549.7,37.0 l-1.5,1.5 h3 z M549.7,45.0 l-1.5,-1.5 h3 z" fill="#222"/><rect x="568.2" y="35.4" width="11" height="11.2" fill="#fafafa"/><path d="M568.6,46.6 V35.8 H579.2" fill="none" stroke="#b4b4b4" stroke-width="1"/><rect x="570.3" y="37.5" width="5" height="5" fill="#fff" stroke="#222" stroke-width="0.7"/><rect x="572.3" y="39.5" width="5" height="5" fill="#fff" stroke="#222" stroke-width="0.7"/><path d="M581.5,39.5 l2,-2.5 h5 v5 l-2,2.5 h-5 z" fill="#30c8d8" stroke="#205060" stroke-width="0.7"/><path d="M592.8,39.5 l2,-2.5 h5 v5 l-2,2.5 h-5 z" fill="#30c8d8" stroke="#205060" stroke-width="0.7"/><path d="M603.9,39.5 l2,-2.5 h5 v5 l-2,2.5 h-5 z" fill="#30c8d8" stroke="#205060" stroke-width="0.7"/><path d="M615.1,38.0 h7 v2 l-3.5,4.5 l-3.5,-4.5 z" fill="#a8a8a8"/><rect x="626.6" y="38.5" width="8" height="5.5" fill="#fff" stroke="#222" stroke-width="0.7"/><path d="M627.6,41.0 h6" stroke="#e03030" stroke-width="0.8"/></svg>
<!-- left panel: Entities -->
<div class="a" style="left:0;top:49px;width:110px;height:465px;background:#f0f0f0"></div>
<div class="a" style="left:2px;top:49.8px;width:98px;height:6.8px;background:linear-gradient(90deg,#c2d2e6,#d2ddee 60%,#e4eaf4)"></div>
<div class="t" style="left:2.5px;top:50.6px;font-size:5.6px;color:#4a5060">Entities</div>
<svg class="a" style="left:102px;top:50.4px" width="5" height="5" viewBox="0 0 5 5"><path d="M1,1 L4,4 M4,1 L1,4" stroke="#111" stroke-width="1.1"/></svg>
<div class="a" style="left:2px;top:57.2px;width:104px;height:196.5px;border-left:0.9px solid #6c6c6c;border-top:0.9px solid #6c6c6c;background:#fff"></div>
<div class="a" style="left:3px;top:58px;width:103px;height:10.5px;background:#f0f0f0;border-bottom:0.8px solid #8c8c8c"></div>
<div class="a" style="left:7.5px;top:58.6px;width:23.5px;height:10.4px;background:#fbfbfb;border:0.6px solid #909090;border-bottom:none"></div>
<div class="t" style="left:9.5px;top:62px;font-size:5.2px;color:#000;-webkit-text-stroke:0.08px #000">Parents</div>
<div class="a" style="left:31px;top:60.5px;width:24px;height:8px;background:#f0f0f0;border:0.6px solid #909090;border-bottom:none"></div>
<div class="t" style="left:33px;top:62.7px;font-size:5.2px;color:#000;-webkit-text-stroke:0.08px #000">Children</div>
<svg class="a" style="left:0;top:0" width="110" height="260" viewBox="0 0 110 260" font-family="Liberation Sans"><path d="M9.4,73.9 V225.9" stroke="#a0a0a0" stroke-width="0.6" stroke-dasharray="0.8 0.8"/><path d="M9.4,73.9 H14.5" stroke="#a0a0a0" stroke-width="0.6" stroke-dasharray="0.8 0.8"/><circle cx="18.3" cy="73.80000000000001" r="2.4" fill="#f4ee40" stroke="#111" stroke-width="0.8"/><rect x="14.8" y="73.2" width="1.6" height="1.2" fill="#111"/><path d="M9.4,81.9 H14.5" stroke="#a0a0a0" stroke-width="0.6" stroke-dasharray="0.8 0.8"/><rect x="7.2" y="79.7" width="4.4" height="4.4" fill="#fff" stroke="#6a6a6a" stroke-width="0.6"/><path d="M8.1,81.9 h2.6 M9.4,80.60000000000001 v2.6" stroke="#000" stroke-width="0.7"/><path d="M15.3,79.60000000000001 l5,-0.5 l0.8,3 l-2.8,3 z" fill="#f4ee40" stroke="#111" stroke-width="0.8"/><path d="M9.4,89.9 H14.5" stroke="#a0a0a0" stroke-width="0.6" stroke-dasharray="0.8 0.8"/><rect x="7.2" y="87.7" width="4.4" height="4.4" fill="#fff" stroke="#6a6a6a" stroke-width="0.6"/><path d="M8.1,89.9 h2.6 M9.4,88.60000000000001 v2.6" stroke="#000" stroke-width="0.7"/><rect x="14.8" y="86.60000000000001" width="6.5" height="6.5" fill="#f4ee40"/><path d="M15.3,92.10000000000001 l2,-3 l1.5,1.5 l2,-3" fill="none" stroke="#111" stroke-width="0.8"/><path d="M9.4,97.9 H14.5" stroke="#a0a0a0" stroke-width="0.6" stroke-dasharray="0.8 0.8"/><rect x="7.2" y="95.7" width="4.4" height="4.4" fill="#fff" stroke="#6a6a6a" stroke-width="0.6"/><path d="M8.1,97.9 h2.6 M9.4,96.60000000000001 v2.6" stroke="#000" stroke-width="0.7"/><rect x="14.8" y="94.60000000000001" width="6.5" height="6.5" fill="#f4ee40"/><path d="M15.8,95.60000000000001 l4.5,4.5 M20.3,95.60000000000001 l-4.5,4.5" stroke="#111" stroke-width="0.8"/><path d="M9.4,105.9 H14.5" stroke="#a0a0a0" stroke-width="0.6" stroke-dasharray="0.8 0.8"/><path d="M15.3,103.10000000000001 l6,6" stroke="#f4ee40" stroke-width="2.4"/><path d="M15.3,103.10000000000001 l6,6" stroke="#444" stroke-width="0.4" stroke-dasharray="1 1"/><path d="M9.4,113.9 H14.5" stroke="#a0a0a0" stroke-width="0.6" stroke-dasharray="0.8 0.8"/><rect x="14.8" y="110.60000000000001" width="6.5" height="6.5" fill="#f4ee40"/><path d="M16.0,111.4 v4.8 h4.5 M16.0,116.2 l3,-3" fill="none" stroke="#111" stroke-width="0.8"/><path d="M9.4,121.9 H14.5" stroke="#a0a0a0" stroke-width="0.6" stroke-dasharray="0.8 0.8"/><rect x="14.8" y="118.60000000000001" width="6.5" height="6.5" fill="#f4ee40" stroke="#111" stroke-width="0.6"/><path d="M18.05,118.60000000000001 v6.5 M14.8,121.85000000000001 h6.5" stroke="#111" stroke-width="0.5"/><path d="M9.4,129.9 H14.5" stroke="#a0a0a0" stroke-width="0.6" stroke-dasharray="0.8 0.8"/><rect x="14.8" y="127.60000000000001" width="6.5" height="5.5" fill="#f4ee40"/><path d="M15.8,132.60000000000002 l5,-6" stroke="#8020c0" stroke-width="1.4"/><path d="M9.4,137.9 H14.5" stroke="#a0a0a0" stroke-width="0.6" stroke-dasharray="0.8 0.8"/><rect x="7.2" y="135.70000000000002" width="4.4" height="4.4" fill="#fff" stroke="#6a6a6a" stroke-width="0.6"/><path d="M8.1,137.9 h2.6 M9.4,136.6 v2.6" stroke="#000" stroke-width="0.7"/><rect x="14.8" y="134.9" width="6.5" height="6.2" fill="#f0a030" stroke="#c02020" stroke-width="0.6"/><path d="M15.8,136.6 h4.5 M15.8,138.6 h4.5" stroke="#e02020" stroke-width="0.6"/><path d="M9.4,145.9 H14.5" stroke="#a0a0a0" stroke-width="0.6" stroke-dasharray="0.8 0.8"/><path d="M15.100000000000001,144.6 l2,-1.8 h4 v4.5 l-2,1.8 h-4 z" fill="#f4ee40" stroke="#111" stroke-width="0.7"/><path d="M9.4,153.9 H14.5" stroke="#a0a0a0" stroke-width="0.6" stroke-dasharray="0.8 0.8"/><rect x="14.8" y="150.6" width="6.5" height="6.5" fill="#f4ee40"/><circle cx="16.6" cy="152.4" r="1.4" fill="none" stroke="#111" stroke-width="0.6"/><circle cx="19.5" cy="152.4" r="1.4" fill="none" stroke="#111" stroke-width="0.6"/><circle cx="16.6" cy="155.29999999999998" r="1.4" fill="none" stroke="#111" stroke-width="0.6"/><circle cx="19.5" cy="155.29999999999998" r="1.4" fill="none" stroke="#111" stroke-width="0.6"/><path d="M9.4,161.9 H14.5" stroke="#a0a0a0" stroke-width="0.6" stroke-dasharray="0.8 0.8"/><rect x="14.8" y="158.6" width="6.5" height="6.5" fill="#f4ee40"/><path d="M15.5,164.6 v-3 l3,-2 h2" fill="none" stroke="#e02020" stroke-width="0.8" stroke-dasharray="1 0.8"/><path d="M9.4,169.9 H14.5" stroke="#a0a0a0" stroke-width="0.6" stroke-dasharray="0.8 0.8"/><rect x="14.8" y="166.6" width="6.5" height="6.5" fill="#f4ee40"/><rect x="15.100000000000001" y="168.4" width="6" height="3" fill="#fff" stroke="#222" stroke-width="0.6"/><path d="M15.8,169.9 h4.5" stroke="#2030c0" stroke-width="0.6"/><path d="M9.4,177.9 H14.5" stroke="#a0a0a0" stroke-width="0.6" stroke-dasharray="0.8 0.8"/><rect x="14.8" y="174.6" width="6.5" height="6.5" fill="#f4ee40"/><path d="M15.8,180.6 q0,-4 4,-5" fill="none" stroke="#111" stroke-width="0.6" stroke-dasharray="1 1"/><path d="M9.4,185.9 H14.5" stroke="#a0a0a0" stroke-width="0.6" stroke-dasharray="0.8 0.8"/><rect x="14.8" y="182.6" width="6.5" height="6.5" fill="#f4ee40"/><path d="M15.3,184.1 l2,3 M17.3,184.1 l-2,3 M18.1,184.9 h2.8 M18.1,186.4 h2.8" stroke="#111" stroke-width="0.7"/><path d="M9.4,193.9 H14.5" stroke="#a0a0a0" stroke-width="0.6" stroke-dasharray="0.8 0.8"/><rect x="14.8" y="190.6" width="6.5" height="6.5" fill="#f4ee40"/><text x="15.0" y="196.9" font-size="7.4" font-weight="bold" fill="#111">A</text><path d="M9.4,201.9 H14.5" stroke="#a0a0a0" stroke-width="0.6" stroke-dasharray="0.8 0.8"/><rect x="14.8" y="198.6" width="6.5" height="6.5" fill="#f4ee40"/><path d="M16.0,201.0 h4.2 M16.0,202.9 h4.2" stroke="#111" stroke-width="0.9"/><path d="M9.4,209.9 H14.5" stroke="#a0a0a0" stroke-width="0.6" stroke-dasharray="0.8 0.8"/><rect x="7.2" y="207.70000000000002" width="4.4" height="4.4" fill="#fff" stroke="#6a6a6a" stroke-width="0.6"/><path d="M8.1,209.9 h2.6 M9.4,208.6 v2.6" stroke="#000" stroke-width="0.7"/><rect x="14.8" y="206.6" width="6.5" height="6.5" fill="#a8a050" stroke="#444" stroke-width="0.6"/><path d="M15.8,208.6 h4.5 M15.8,210.1 h4.5 M15.8,211.6 h4.5" stroke="#555" stroke-width="0.5"/><path d="M9.4,217.9 H14.5" stroke="#a0a0a0" stroke-width="0.6" stroke-dasharray="0.8 0.8"/><rect x="7.2" y="215.70000000000002" width="4.4" height="4.4" fill="#fff" stroke="#6a6a6a" stroke-width="0.6"/><path d="M8.1,217.9 h2.6 M9.4,216.6 v2.6" stroke="#000" stroke-width="0.7"/><path d="M18.05,214.79999999999998 v6.3 M15.0,217.9 h6.1 M15.8,215.6 l4.5,4.5 M20.3,215.6 l-4.5,4.5" stroke="#e8d800" stroke-width="1.4"/><path d="M18.05,215.79999999999998 v4.2 M15.9,217.9 h4.3" stroke="#222" stroke-width="0.6"/><path d="M9.4,225.9 H14.5" stroke="#a0a0a0" stroke-width="0.6" stroke-dasharray="0.8 0.8"/><path d="M15.600000000000001,223.1 v6 M15.600000000000001,223.6 h2 M15.600000000000001,228.1 h2" stroke="#222" stroke-width="0.7" fill="none"/><path d="M17.3,225.79999999999998 h3.5" stroke="#e02020" stroke-width="0.8"/><rect x="16.6" y="227.1" width="1.4" height="1.4" fill="#20b020"/></svg><div class="t" style="left:25.2px;top:71.80px;font-size:5.28px;color:#000;-webkit-text-stroke:0.07px #000">Components</div>
<div class="t" style="left:25.2px;top:79.80px;font-size:5.28px;color:#000;-webkit-text-stroke:0.07px #000">Surfaces</div>
<div class="t" style="left:25.2px;top:87.80px;font-size:5.28px;color:#000;-webkit-text-stroke:0.07px #000">Curves</div>
<div class="t" style="left:25.2px;top:95.80px;font-size:5.28px;color:#000;-webkit-text-stroke:0.07px #000">Points</div>
<div class="t" style="left:25.2px;top:103.80px;font-size:5.28px;color:#000;-webkit-text-stroke:0.07px #000">Planes</div>
<div class="t" style="left:25.2px;top:111.80px;font-size:5.28px;color:#000;-webkit-text-stroke:0.07px #000">Frames</div>
<div class="t" style="left:25.2px;top:119.80px;font-size:5.28px;color:#000;-webkit-text-stroke:0.07px #000">Triangle Meshes</div>
<div class="t" style="left:25.2px;top:127.80px;font-size:5.28px;color:#000;-webkit-text-stroke:0.07px #000">Wireframes</div>
<div class="t" style="left:25.2px;top:135.80px;font-size:5.28px;color:#000;-webkit-text-stroke:0.07px #000">Contours</div>
<div class="t" style="left:25.2px;top:143.80px;font-size:5.28px;color:#000;-webkit-text-stroke:0.07px #000">Solids</div>
<div class="t" style="left:25.2px;top:151.80px;font-size:5.28px;color:#000;-webkit-text-stroke:0.07px #000">Composite Surfaces</div>
<div class="t" style="left:25.2px;top:159.80px;font-size:5.28px;color:#000;-webkit-text-stroke:0.07px #000">Relabels</div>
<div class="t" style="left:25.2px;top:167.80px;font-size:5.28px;color:#000;-webkit-text-stroke:0.07px #000">Graphs</div>
<div class="t" style="left:25.2px;top:175.80px;font-size:5.28px;color:#000;-webkit-text-stroke:0.07px #000">Knotlists</div>
<div class="t" style="left:25.2px;top:183.80px;font-size:5.28px;color:#000;-webkit-text-stroke:0.07px #000">Variables &amp; Formulas</div>
<div class="t" style="left:25.2px;top:191.80px;font-size:5.28px;color:#000;-webkit-text-stroke:0.07px #000">Text Labels</div>
<div class="t" style="left:25.2px;top:199.80px;font-size:5.28px;color:#000;-webkit-text-stroke:0.07px #000">Solve Sets</div>
<div class="t" style="left:25.2px;top:207.80px;font-size:5.28px;color:#000;-webkit-text-stroke:0.07px #000">Entity Lists</div>
<div class="t" style="left:25.2px;top:215.80px;font-size:5.28px;color:#000;-webkit-text-stroke:0.07px #000">System</div>
<div class="t" style="left:25.2px;top:223.80px;font-size:5.28px;color:#000;-webkit-text-stroke:0.07px #000">No Dependents</div>
<!-- Properties -->
<div class="a" style="left:0;top:255.3px;width:108px;height:0.7px;background:#cfcfcf"></div>
<div class="a" style="left:2px;top:257px;width:98px;height:6.5px;background:linear-gradient(90deg,#c2d2e6,#d2ddee 60%,#dde6f2)"></div>
<div class="t" style="left:2.5px;top:257.7px;font-size:5.6px;color:#4a5060">Properties</div>
<svg class="a" style="left:102px;top:257.8px" width="5" height="5" viewBox="0 0 5 5"><path d="M1,1 L4,4 M4,1 L1,4" stroke="#111" stroke-width="1.1"/></svg>
<div class="a" style="left:2px;top:264.2px;width:104px;height:142px;border-left:0.9px solid #6c6c6c;border-top:0.9px solid #6c6c6c;background:#f0f0f0"></div>
<div class="a" style="left:3px;top:272.8px;width:103px;height:1px;background:#7c7c7c"></div>
<div class="a" style="left:98.8px;top:265.5px;width:6px;height:6.3px;border-right:0.6px solid #666;border-bottom:0.6px solid #666"></div>
<svg class="a" style="left:99.5px;top:265.8px" width="5" height="6" viewBox="0 0 5 6"><circle cx="2.5" cy="2" r="1.6" fill="#d8c400" stroke="#444" stroke-width="0.5"/><rect x="2" y="3.4" width="1" height="2" fill="#333"/></svg>
<!-- Selection Set -->
<div class="a" style="left:0;top:408.6px;width:108px;height:0.7px;background:#cfcfcf"></div>
<div class="a" style="left:2px;top:410.7px;width:98px;height:6px;background:linear-gradient(90deg,#c2d2e6,#d2ddee 60%,#dde6f2)"></div>
<div class="t" style="left:2.5px;top:411px;font-size:5.6px;color:#4a5060">Selection Set</div>
<svg class="a" style="left:102px;top:411.1px" width="5" height="5" viewBox="0 0 5 5"><path d="M1,1 L4,4 M4,1 L1,4" stroke="#111" stroke-width="1.1"/></svg>
<div class="a" style="left:2px;top:417.4px;width:104px;height:95px;border-left:0.9px solid #6c6c6c;border-top:0.9px solid #6c6c6c;background:#f0f0f0"></div>
<div class="a" style="left:5px;top:429.6px;width:101px;height:82px;border-left:0.9px solid #6c6c6c;border-top:0.9px solid #6c6c6c;background:#fff"></div>
<div class="a" style="left:6px;top:430.5px;width:100px;height:8.5px;background:linear-gradient(#fafafa,#eeeeee);border-bottom:0.8px solid #8a8a8a"></div>
<div class="a" style="left:55.5px;top:431px;width:0.8px;height:8px;background:#9a9a9a"></div>
<div class="t" style="left:9px;top:432.6px;font-size:5.3px;color:#000;-webkit-text-stroke:0.08px #000">Name</div>
<div class="t" style="left:60px;top:432.6px;font-size:5.3px;color:#000;-webkit-text-stroke:0.08px #000">Type</div>
<div class="t" style="left:67px;top:421.5px;font-size:5.3px;color:#000;-webkit-text-stroke:0.08px #000">0 Entities</div>
<div class="a" style="left:6px;top:506.8px;width:100px;height:4.6px;background:linear-gradient(#f4f4f4,#d8d8d8 60%,#c8c8c8)"></div>
<div class="a" style="left:87px;top:507px;width:15px;height:4.2px;background:#ececec;border-left:0.5px solid #bbb"></div>
<div class="t" style="left:6px;top:506.5px;font-size:4px;color:#222">◀</div>
<div class="t" style="left:102.5px;top:506.5px;font-size:4px;color:#222">▶</div>
<svg class="a" style="left:0;top:0" width="110" height="525" viewBox="0 0 110 525"><rect x="6.0" y="419.5" width="9" height="9.5" fill="#f4f4f4" stroke="#a0a0a0" stroke-width="0.5"/><rect x="18.0" y="419.5" width="9" height="9.5" fill="#f4f4f4" stroke="#a0a0a0" stroke-width="0.5"/><rect x="30.5" y="419.5" width="9" height="9.5" fill="#f4f4f4" stroke="#a0a0a0" stroke-width="0.5"/><rect x="42.0" y="419.5" width="9" height="9.5" fill="#f4f4f4" stroke="#a0a0a0" stroke-width="0.5"/><rect x="54.0" y="419.5" width="9" height="9.5" fill="#f4f4f4" stroke="#a0a0a0" stroke-width="0.5"/><path d="M7.5,421.5 v6 M9.5,421.5 v6 h4 v-6 z M11.5,421.5 v6" fill="none" stroke="#222" stroke-width="0.7"/><path d="M22.5,427.5 v-5.5 M20.5,424 l2,-2 l2,2" fill="none" stroke="#888" stroke-width="0.7"/><path d="M35,421.5 v5.5 M33,425 l2,2 l2,-2" fill="none" stroke="#888" stroke-width="0.7"/><path d="M43.5,421.5 l6,6 M49.5,421.5 l-6,6" stroke="#999" stroke-width="0.6"/><path d="M55.5,421.5 h6 l-6,6 h6 z" fill="none" stroke="#999" stroke-width="0.6"/></svg>
<!-- MDI frames -->
<div class="a" style="left:109.2px;top:48.7px;width:1.4px;height:465px;background:#5a534c"></div><div class="a" style="left:109.2px;top:48.7px;width:590px;height:0.9px;background:#5a534c"></div>
<!-- top child window -->
<div class="a" style="left:110.6px;top:49.6px;width:588.4px;height:231px;background:#eaf3fb;border-right:0.9px solid #707070"></div><div class="a" style="left:697.1px;top:49.6px;width:1px;height:231px;background:#38c4f0"></div><div class="a" style="left:698.1px;top:49.6px;width:0.9px;height:231px;background:#1a5060"></div>
<div class="a" style="left:110.6px;top:49.6px;width:586.5px;height:11.1px;background:linear-gradient(#d0f0ff 0,#d0f0ff 1px,#80a0c0 1.5px,#8aa8c8 2.3px,#a4c0dc 2.7px,#b0c8e4 8.8px,#c8e4f8 9.2px,#c8e4f8 10.2px,#707070 11.1px)"></div>
<svg class="a" style="left:112.5px;top:51px" width="9" height="8.5" viewBox="0 0 9 8.5"><path d="M0.6,4 L3.6,0.4 L8.1,0.4 L5.3,4 L8.1,7.6 L3.6,7.6 Z" fill="#10f010"/><path d="M3.6,0.4 L0.6,4 L3.6,7.6" fill="none" stroke="#9030d0" stroke-width="0.9"/><path d="M8.1,0.4 L5.3,4 L8.1,7.6" fill="none" stroke="#2030e0" stroke-width="0.8"/><circle cx="0.9" cy="4" r="0.7" fill="#111"/></svg>
<div class="t" style="left:123.4px;top:53.5px;font-size:5.75px;color:#000;-webkit-text-stroke:0.12px #000">sy15_full_chin.ms2:1</div>
<div class="a" style="left:112.9px;top:60.7px;width:582.9px;height:217.3px;background:#000"></div>
<div class="a" style="left:110.3px;top:279.6px;width:588px;height:1px;background:#26b8e8"></div>
<div class="a" style="left:110.3px;top:280.8px;width:588px;height:1px;background:#505050"></div>
<!-- bottom child window -->
<div class="a" style="left:110.3px;top:282px;width:588.2px;height:231.5px;background:#f4f9fd;border-right:0.9px solid #707070;border-bottom:0.9px solid #606060"></div>
<div class="a" style="left:110.6px;top:282px;width:588px;height:10.9px;background:linear-gradient(#ffffff 0,#ffffff 1px,#b8ccdc 1.3px,#d0dce8 8.8px,#e8f4fc 9.2px,#e8f4fc 10.3px,#404040 10.9px)"></div>
<svg class="a" style="left:112.5px;top:283.3px" width="9" height="8.5" viewBox="0 0 9 8.5"><path d="M0.6,4 L3.6,0.4 L8.1,0.4 L5.3,4 L8.1,7.6 L3.6,7.6 Z" fill="#10f010"/><path d="M3.6,0.4 L0.6,4 L3.6,7.6" fill="none" stroke="#9030d0" stroke-width="0.9"/><path d="M8.1,0.4 L5.3,4 L8.1,7.6" fill="none" stroke="#2030e0" stroke-width="0.8"/><circle cx="0.9" cy="4" r="0.7" fill="#111"/></svg>
<div class="t" style="left:123.4px;top:285.7px;font-size:5.75px;color:#000;-webkit-text-stroke:0.12px #000">sy15_full_chine.ms2:1</div>
<div class="a" style="left:112.9px;top:292.9px;width:582.9px;height:217.7px;background:#000"></div>
<div class="a" style="left:658px;top:52.6px;width:11px;height:6px;border:0.5px solid #7a8aa0;border-radius:1px;background:linear-gradient(#f0f4fa,#c8d4e4)"><div class="a" style="left:3px;top:2.9px;width:5px;height:2px;background:#fff;border:0.45px solid #445"></div></div>
<div class="a" style="left:671.3px;top:52.6px;width:11px;height:6px;border:0.5px solid #7a8aa0;border-radius:1px;background:linear-gradient(#f0f4fa,#c8d4e4)"><div class="a" style="left:3px;top:1px;width:4.2px;height:3px;border:0.7px solid #334"></div></div>
<div class="a" style="left:684.2px;top:52.6px;width:11px;height:6px;border:0.5px solid #7a3020;border-radius:1px;background:linear-gradient(#e8907a,#c8452a)"><svg class="a" style="left:0;top:0" width="11" height="6" viewBox="0 0 11 6"><path d="M4,1.4 L7,4.4 M7,1.4 L4,4.4" stroke="#fff" stroke-width="1.1"/></svg></div>
<div class="a" style="left:658px;top:284.7px;width:11px;height:6px;border:0.5px solid #7a8aa0;border-radius:1px;background:linear-gradient(#f0f4fa,#c8d4e4)"><div class="a" style="left:3px;top:2.9px;width:5px;height:2px;background:#fff;border:0.45px solid #445"></div></div>
<div class="a" style="left:671.3px;top:284.7px;width:11px;height:6px;border:0.5px solid #7a8aa0;border-radius:1px;background:linear-gradient(#f0f4fa,#c8d4e4)"><div class="a" style="left:3px;top:1px;width:4.2px;height:3px;border:0.7px solid #334"></div></div>
<div class="a" style="left:684.2px;top:284.7px;width:11px;height:6px;border:0.5px solid #7a8aa0;border-radius:1px;background:linear-gradient(#f0f4fa,#c8d4e4)"><svg class="a" style="left:0;top:0" width="11" height="6" viewBox="0 0 11 6"><path d="M4,1.4 L7,4.4 M7,1.4 L4,4.4" stroke="#667" stroke-width="1"/></svg></div>
<svg class="a" style="left:0;top:0" width="700" height="525" viewBox="0 0 700 525" font-family="Liberation Sans">
<defs><clipPath id="c1"><rect x="112.9" y="60.7" width="582.9" height="217.3"/></clipPath><clipPath id="c2"><rect x="112.9" y="292.9" width="582.9" height="217.7"/></clipPath></defs>
<g clip-path="url(#c1)">
<line x1="616.6" y1="70" x2="616.6" y2="278" stroke="#cfcfcf" stroke-width="1" stroke-dasharray="1.3 2.7"/>
<line x1="119" y1="166.6" x2="695" y2="234" stroke="#cfcfcf" stroke-width="1" stroke-dasharray="1.3 2.7"/>
<line x1="454" y1="252" x2="688" y2="213" stroke="#cfcfcf" stroke-width="1" stroke-dasharray="1.3 2.7"/>
<path d="M616.3,63 H621 L616.3,67.8 H621" fill="none" stroke="#f0f0f0" stroke-width="1"/>
<path d="M113.4,167.4 l4.4,4.6 M117.8,167.4 l-4.4,4.6" stroke="#f4f4f4" stroke-width="1"/>
<path d="M688,213.2 L690.4,215.8 L692.8,213.2 M690.4,215.8 V218.6" fill="none" stroke="#f0f0f0" stroke-width="0.9"/>
<path d="M185.0,101.9 C194.8,103.0 222.9,106.4 244.0,108.7 C265.1,111.0 286.2,112.8 311.4,115.6 C336.6,118.4 368.0,122.5 395.0,125.6 C422.0,128.7 449.4,131.4 473.6,134.3 C497.8,137.2 516.2,140.0 540.0,143.2 C563.8,146.4 603.8,151.6 616.6,153.3" fill="none" stroke="#c9c9c9" stroke-width="0.8"/>
<path d="M182.3,137.3 C191.6,138.6 218.7,142.4 238.3,145.3 C257.9,148.2 276.3,151.4 300.0,155.0 C323.7,158.6 354.2,162.5 380.3,166.7 C406.4,170.9 431.7,175.9 456.9,180.4 C482.1,184.9 510.8,189.8 531.4,193.6 C552.0,197.4 566.5,200.2 580.7,203.2 C594.9,206.2 610.6,210.4 616.6,211.8" fill="none" stroke="#c9c9c9" stroke-width="0.8"/>
<line x1="616.6" y1="153.3" x2="616.6" y2="211.8" stroke="#c9c9c9" stroke-width="0.8"/>
<line x1="185.0" y1="101.9" x2="182.3" y2="137.3" stroke="#c9c9c9" stroke-width="0.75"/>
<line x1="205.1" y1="104.2" x2="195.5" y2="139.2" stroke="#c9c9c9" stroke-width="0.75"/>
<line x1="224.6" y1="106.5" x2="209.3" y2="141.2" stroke="#c9c9c9" stroke-width="0.75"/>
<line x1="244.0" y1="108.7" x2="223.4" y2="143.2" stroke="#c9c9c9" stroke-width="0.75"/>
<line x1="262.3" y1="110.6" x2="238.3" y2="145.3" stroke="#c9c9c9" stroke-width="0.75"/>
<line x1="279.4" y1="112.3" x2="253.0" y2="147.6" stroke="#c9c9c9" stroke-width="0.75"/>
<line x1="295.4" y1="114.0" x2="269.0" y2="150.1" stroke="#c9c9c9" stroke-width="0.75"/>
<line x1="311.4" y1="115.6" x2="285.0" y2="152.6" stroke="#c9c9c9" stroke-width="0.75"/>
<line x1="326.3" y1="117.4" x2="300.0" y2="155.0" stroke="#c9c9c9" stroke-width="0.75"/>
<line x1="340.0" y1="119.0" x2="317.0" y2="157.5" stroke="#c9c9c9" stroke-width="0.75"/>
<line x1="354.0" y1="120.7" x2="332.3" y2="159.7" stroke="#c9c9c9" stroke-width="0.75"/>
<line x1="367.7" y1="122.3" x2="348.3" y2="162.0" stroke="#c9c9c9" stroke-width="0.75"/>
<line x1="381.4" y1="124.0" x2="364.3" y2="164.4" stroke="#c9c9c9" stroke-width="0.75"/>
<line x1="395.0" y1="125.6" x2="380.3" y2="166.7" stroke="#c9c9c9" stroke-width="0.75"/>
<line x1="407.7" y1="127.0" x2="396.3" y2="169.6" stroke="#c9c9c9" stroke-width="0.75"/>
<line x1="419.0" y1="128.3" x2="411.0" y2="172.2" stroke="#c9c9c9" stroke-width="0.75"/>
<line x1="431.7" y1="129.7" x2="426.0" y2="174.9" stroke="#c9c9c9" stroke-width="0.75"/>
<line x1="443.0" y1="130.9" x2="442.0" y2="177.7" stroke="#c9c9c9" stroke-width="0.75"/>
<line x1="455.7" y1="132.3" x2="456.4" y2="180.3" stroke="#c9c9c9" stroke-width="0.75"/>
<line x1="464.3" y1="133.3" x2="473.6" y2="183.4" stroke="#c9c9c9" stroke-width="0.75"/>
<line x1="473.6" y1="134.3" x2="488.6" y2="186.0" stroke="#c9c9c9" stroke-width="0.75"/>
<line x1="484.3" y1="135.7" x2="503.6" y2="188.7" stroke="#c9c9c9" stroke-width="0.75"/>
<line x1="495.0" y1="137.2" x2="518.6" y2="191.3" stroke="#c9c9c9" stroke-width="0.75"/>
<line x1="505.7" y1="138.6" x2="531.4" y2="193.6" stroke="#c9c9c9" stroke-width="0.75"/>
<line x1="516.4" y1="140.0" x2="544.3" y2="196.1" stroke="#c9c9c9" stroke-width="0.75"/>
<line x1="528.2" y1="141.6" x2="557.0" y2="198.6" stroke="#c9c9c9" stroke-width="0.75"/>
<line x1="540.0" y1="143.2" x2="569.0" y2="200.9" stroke="#c9c9c9" stroke-width="0.75"/>
<line x1="550.7" y1="144.6" x2="580.7" y2="203.2" stroke="#c9c9c9" stroke-width="0.75"/>
<line x1="562.5" y1="146.2" x2="591.4" y2="205.8" stroke="#c9c9c9" stroke-width="0.75"/>
<line x1="573.2" y1="147.6" x2="602.0" y2="208.3" stroke="#c9c9c9" stroke-width="0.75"/>
<line x1="585.0" y1="149.1" x2="609.6" y2="210.1" stroke="#c9c9c9" stroke-width="0.75"/>
<line x1="591.4" y1="150.0" x2="614.0" y2="211.2" stroke="#c9c9c9" stroke-width="0.75"/>
<line x1="599.0" y1="151.0" x2="616.6" y2="211.8" stroke="#c9c9c9" stroke-width="0.75"/>
<path d="M179.8,141.2 C180.7,141.3 178.3,140.7 185.0,142.1 C191.7,143.5 202.5,146.0 220.0,149.4 C237.5,152.8 271.7,159.3 290.0,162.7 C308.3,166.1 305.0,165.7 330.0,170.0 C355.0,174.3 415.0,184.5 440.0,188.7 C465.0,192.9 463.3,192.5 480.0,195.3 C496.7,198.1 523.3,202.7 540.0,205.4 C556.7,208.1 567.2,209.5 580.0,211.5 C592.8,213.5 610.4,216.5 616.5,217.5" fill="none" stroke="#12a8b0" stroke-width="1"/>
<path d="M174.5,144.3 C176.2,144.8 177.4,145.5 185.0,147.4 C192.6,149.3 202.5,151.6 220.0,155.7 C237.5,159.8 271.7,168.1 290.0,172.0 C308.3,175.9 305.0,174.9 330.0,179.3 C355.0,183.7 415.0,194.1 440.0,198.3 C465.0,202.5 463.3,201.9 480.0,204.5 C496.7,207.1 522.5,211.3 540.0,213.8 C557.5,216.3 572.5,218.2 585.0,219.5 C597.5,220.8 610.0,221.2 615.0,221.5" fill="none" stroke="#12a8b0" stroke-width="1"/>
<path d="M169.3,147.4 C171.9,148.3 176.6,150.7 185.0,153.1 C193.4,155.5 202.5,157.4 220.0,162.0 C237.5,166.6 271.7,176.2 290.0,180.5 C308.3,184.8 305.0,183.6 330.0,188.0 C355.0,192.4 415.0,203.0 440.0,207.0 C465.0,211.0 463.3,210.2 480.0,212.2 C496.7,214.2 522.5,217.0 540.0,218.9 C557.5,220.8 572.8,222.5 585.0,223.5 C597.2,224.5 608.8,224.8 613.5,225.0" fill="none" stroke="#12a8b0" stroke-width="1"/>
<path d="M163.1,151.2 C166.8,152.4 175.5,155.5 185.0,158.3 C194.5,161.2 202.5,163.4 220.0,168.3 C237.5,173.2 271.7,183.4 290.0,188.0 C308.3,192.6 305.0,191.6 330.0,196.0 C355.0,200.4 415.0,210.4 440.0,214.2 C465.0,218.0 463.3,217.2 480.0,218.8 C496.7,220.4 522.5,222.6 540.0,224.0 C557.5,225.4 573.1,226.8 585.0,227.5 C596.9,228.2 607.1,228.3 611.5,228.5" fill="none" stroke="#12a8b0" stroke-width="1"/>
<path d="M156.0,153.6 C160.8,155.3 174.3,160.1 185.0,163.6 C195.7,167.1 202.5,169.1 220.0,174.3 C237.5,179.5 271.7,190.0 290.0,194.7 C308.3,199.4 305.0,198.4 330.0,202.7 C355.0,207.0 415.0,217.1 440.0,220.7 C465.0,224.3 463.3,223.0 480.0,224.2 C496.7,225.4 522.5,226.9 540.0,228.0 C557.5,229.1 573.5,230.0 585.0,230.5 C596.5,231.0 605.0,230.9 609.0,231.0" fill="none" stroke="#12a8b0" stroke-width="1"/>
<path d="M148.8,156.7 C154.8,158.6 173.1,164.4 185.0,168.3 C196.9,172.2 202.5,174.6 220.0,180.0 C237.5,185.4 271.7,195.8 290.0,200.7 C308.3,205.6 305.0,205.2 330.0,209.3 C355.0,213.4 415.0,222.0 440.0,225.2 C465.0,228.4 463.3,227.3 480.0,228.3 C496.7,229.3 522.5,230.3 540.0,231.1 C557.5,231.9 574.2,232.7 585.0,233.0 C595.8,233.3 601.7,233.0 605.0,233.0" fill="none" stroke="#12a8b0" stroke-width="1"/>
<path d="M140.7,158.6 C148.1,161.1 171.8,169.2 185.0,173.6 C198.2,178.0 202.5,179.8 220.0,185.0 C237.5,190.2 271.7,200.2 290.0,205.0 C308.3,209.8 305.0,210.0 330.0,214.0 C355.0,218.0 415.0,226.1 440.0,229.1 C465.0,232.1 463.3,231.2 480.0,232.0 C496.7,232.8 522.5,233.2 540.0,233.7 C557.5,234.2 575.0,234.6 585.0,234.8 C595.0,235.0 597.5,234.8 600.0,234.8" fill="none" stroke="#12a8b0" stroke-width="1"/>
<path d="M131.7,160.0 C140.6,163.3 170.3,174.8 185.0,179.8 C199.7,184.8 202.5,185.1 220.0,190.0 C237.5,194.9 271.7,204.9 290.0,209.5 C308.3,214.1 305.0,213.7 330.0,217.3 C355.0,221.0 415.0,228.5 440.0,231.4 C465.0,234.3 463.3,233.8 480.0,234.5 C496.7,235.2 523.3,235.3 540.0,235.6 C556.7,235.9 570.7,236.1 580.0,236.2 C589.3,236.3 593.3,236.0 596.0,236.0" fill="none" stroke="#12a8b0" stroke-width="1"/>
<path d="M616.5,211.8 C616.5,213.2 616.9,218.0 616.5,220.5 C616.1,223.0 615.2,225.2 614.0,227.0 C612.8,228.8 611.6,229.9 609.4,231.2 C607.2,232.5 603.9,234.1 601.0,235.0 C598.1,235.9 593.5,236.2 592.0,236.5" fill="none" stroke="#12a8b0" stroke-width="1"/>
<path d="M182.6,137.4 C182.1,138.0 182.0,139.5 179.8,141.2 C177.6,142.9 173.3,145.3 169.3,147.4 C165.3,149.5 160.8,151.7 156.0,153.6 C151.2,155.5 144.8,157.5 140.7,158.6 C136.6,159.7 133.2,159.8 131.7,160.0" fill="none" stroke="#12a8b0" stroke-width="1"/>
<path d="M131.7,160 L185,179.8" fill="none" stroke="#12a8b0" stroke-width="1"/>
<path d="M182.3,137.3 C191.6,138.6 218.7,142.4 238.3,145.3 C257.9,148.2 276.3,151.4 300.0,155.0 C323.7,158.6 354.2,162.5 380.3,166.7 C406.4,170.9 431.7,175.9 456.9,180.4 C482.1,184.9 510.8,189.8 531.4,193.6 C552.0,197.4 566.5,200.2 580.7,203.2 C594.9,206.2 610.6,210.4 616.6,211.8" fill="none" stroke="#c9c9c9" stroke-width="0.8"/>
<text x="415" y="156.2" fill="#ffffff" font-size="6.6" font-weight="bold" letter-spacing="0.15">topside_0</text>
<text x="393.5" y="206.5" fill="#14f0f4" font-size="6.6" font-weight="bold">bottom_0</text>
</g>
<g clip-path="url(#c2)">
<line x1="616.6" y1="302" x2="616.6" y2="511" stroke="#cfcfcf" stroke-width="1" stroke-dasharray="1.3 2.7"/>
<line x1="119" y1="401" x2="695" y2="464.5" stroke="#cfcfcf" stroke-width="1" stroke-dasharray="1.3 2.7"/>
<line x1="455" y1="483" x2="688" y2="445" stroke="#cfcfcf" stroke-width="1" stroke-dasharray="1.3 2.7"/>
<path d="M616.3,295.3 H621 L616.3,300.1 H621" fill="none" stroke="#f0f0f0" stroke-width="1"/>
<path d="M113.4,398.8 l4.4,4.6 M117.8,398.8 l-4.4,4.6" stroke="#f4f4f4" stroke-width="1"/>
<path d="M688,445.2 L690.4,447.8 L692.8,445.2 M690.4,447.8 V450.8" fill="none" stroke="#f0f0f0" stroke-width="0.9"/>
<path d="M185.4,333.7 C202.7,335.6 255.8,341.4 289.0,345.0 C322.2,348.6 352.2,351.3 384.9,355.1 C417.6,358.9 453.6,363.7 485.0,367.7 C516.4,371.7 551.0,375.9 573.0,378.9 C595.0,381.9 609.7,384.5 617.0,385.6" fill="none" stroke="#c9c9c9" stroke-width="0.8"/>
<path d="M182.0,370.0 C199.2,372.5 252.2,380.2 284.9,385.1 C317.6,390.0 345.9,394.1 378.0,399.4 C410.1,404.6 445.9,410.7 477.7,416.6 C509.5,422.5 545.9,429.9 569.0,434.6 C592.1,439.3 608.5,443.3 616.4,445.0" fill="none" stroke="#c9c9c9" stroke-width="0.8"/>
<path d="M174.9,379.4 C192.0,384.5 244.9,401.7 277.4,410.0 C309.9,418.3 337.7,423.3 370.0,429.0 C402.3,434.7 438.7,439.7 471.4,444.3 C504.1,448.9 541.8,453.5 566.0,456.7 C590.2,459.9 608.0,462.2 616.4,463.3" fill="none" stroke="#c9c9c9" stroke-width="0.8"/>
<path d="M153.4,388.6 C169.3,394.2 217.2,412.5 249.0,422.0 C280.8,431.5 310.3,439.4 344.3,445.7 C378.3,452.0 417.4,457.1 452.9,460.0 C488.4,462.9 530.1,462.7 557.4,463.3 C584.6,463.9 606.6,463.7 616.4,463.8" fill="none" stroke="#c9c9c9" stroke-width="0.8"/>
<line x1="185.4" y1="333.7" x2="182" y2="370" stroke="#c9c9c9" stroke-width="0.8"/>
<line x1="617" y1="385.6" x2="616.6" y2="464" stroke="#c9c9c9" stroke-width="0.8"/>
<path d="M131.0,392.0 C147.1,397.6 195.4,416.4 227.7,425.7 C260.0,435.0 289.9,441.7 325.0,448.0 C360.1,454.3 400.9,460.1 438.6,463.4 C476.3,466.7 525.8,467.5 551.4,467.9 C577.0,468.3 582.5,466.6 592.0,466.0 C601.5,465.4 605.8,464.6 608.6,464.3" fill="none" stroke="#12a8b0" stroke-width="1.1"/>
<polyline points="131,392 153.4,388.6 174.9,379.4 182,370" fill="none" stroke="#b08a8a" stroke-width="0.7"/>
<path d="M131,392 C153.4,388.6 174.9,379.4 182,370" fill="none" stroke="#12a8b0" stroke-width="1"/>
<polyline points="227.7,425.7 249,422 277.4,410 284.9,385.1" fill="none" stroke="#b08a8a" stroke-width="0.7"/>
<path d="M227.7,425.7 C249,422 277.4,410 284.9,385.1" fill="none" stroke="#12a8b0" stroke-width="1"/>
<polyline points="325,448 344.3,445.7 370,429 378,399.4" fill="none" stroke="#b08a8a" stroke-width="0.7"/>
<path d="M325,448 C344.3,445.7 370,429 378,399.4" fill="none" stroke="#12a8b0" stroke-width="1"/>
<polyline points="438.6,463.4 452.9,460 471.4,444.3 477.7,416.6" fill="none" stroke="#b08a8a" stroke-width="0.7"/>
<path d="M438.6,463.4 C452.9,460 471.4,444.3 477.7,416.6" fill="none" stroke="#12a8b0" stroke-width="1"/>
<polyline points="551.4,467.9 557.4,463.3 566,456.7 569,434.6" fill="none" stroke="#b08a8a" stroke-width="0.7"/>
<path d="M551.4,467.9 C557.4,463.3 566,456.7 569,434.6" fill="none" stroke="#12a8b0" stroke-width="1"/>
<path d="M608.6,464.3 C612.5,463.8 616.4,461 616.4,445" fill="none" stroke="#12a8b0" stroke-width="1"/>
<rect x="184.6" y="332.9" width="1.6" height="1.6" fill="#ffff30"/>
<rect x="288.2" y="344.2" width="1.6" height="1.6" fill="#ffff30"/>
<rect x="384.1" y="354.3" width="1.6" height="1.6" fill="#ffff30"/>
<rect x="484.2" y="366.9" width="1.6" height="1.6" fill="#ffff30"/>
<rect x="572.2" y="378.1" width="1.6" height="1.6" fill="#ffff30"/>
<rect x="616.2" y="384.8" width="1.6" height="1.6" fill="#ffff30"/>
<rect x="181.2" y="369.2" width="1.6" height="1.6" fill="#ffff30"/>
<rect x="284.1" y="384.3" width="1.6" height="1.6" fill="#ffff30"/>
<rect x="377.2" y="398.6" width="1.6" height="1.6" fill="#ffff30"/>
<rect x="476.9" y="415.8" width="1.6" height="1.6" fill="#ffff30"/>
<rect x="568.2" y="433.8" width="1.6" height="1.6" fill="#ffff30"/>
<rect x="615.6" y="444.2" width="1.6" height="1.6" fill="#ffff30"/>
<rect x="174.1" y="378.6" width="1.6" height="1.6" fill="#ffff30"/>
<rect x="276.6" y="409.2" width="1.6" height="1.6" fill="#ffff30"/>
<rect x="369.2" y="428.2" width="1.6" height="1.6" fill="#ffff30"/>
<rect x="470.6" y="443.5" width="1.6" height="1.6" fill="#ffff30"/>
<rect x="565.2" y="455.9" width="1.6" height="1.6" fill="#ffff30"/>
<rect x="152.6" y="387.8" width="1.6" height="1.6" fill="#ffff30"/>
<rect x="248.2" y="421.2" width="1.6" height="1.6" fill="#ffff30"/>
<rect x="343.5" y="444.9" width="1.6" height="1.6" fill="#ffff30"/>
<rect x="452.1" y="459.2" width="1.6" height="1.6" fill="#ffff30"/>
<rect x="556.6" y="462.5" width="1.6" height="1.6" fill="#ffff30"/>
<rect x="130.2" y="391.2" width="1.6" height="1.6" fill="#ffff30"/>
<rect x="226.9" y="424.9" width="1.6" height="1.6" fill="#ffff30"/>
<rect x="324.2" y="447.2" width="1.6" height="1.6" fill="#ffff30"/>
<rect x="437.8" y="462.6" width="1.6" height="1.6" fill="#ffff30"/>
<rect x="550.6" y="467.1" width="1.6" height="1.6" fill="#ffff30"/>
<rect x="591.2" y="465.2" width="1.6" height="1.6" fill="#ffff30"/>
<rect x="607.8" y="463.5" width="1.6" height="1.6" fill="#ffff30"/>
<text x="162" y="389.8" fill="#14f0f4" font-size="6.6" font-weight="bold" stroke="#14f0f4" stroke-width="0.15">mc6_bot</text>
<text x="261" y="420" fill="#14f0f4" font-size="6.6" font-weight="bold" stroke="#14f0f4" stroke-width="0.15">mc5_bot</text>
<text x="355.7" y="441" fill="#14f0f4" font-size="6.6" font-weight="bold" stroke="#14f0f4" stroke-width="0.15">mc4_bot</text>
<text x="460.9" y="456" fill="#14f0f4" font-size="6.6" font-weight="bold" stroke="#14f0f4" stroke-width="0.15">mc3_bot</text>
<text x="562" y="464.6" fill="#14f0f4" font-size="6.6" font-weight="bold" stroke="#14f0f4" stroke-width="0.15">mc2_bot</text>
<text x="610.7" y="468.6" fill="#14f0f4" font-size="6.6" font-weight="bold" stroke="#14f0f4" stroke-width="0.15">mc1_bot</text>
<text x="432.5" y="367" fill="#d8d8d8" font-size="6.8" letter-spacing="0.2">vl1</text>
<text x="425" y="414" fill="#d8d8d8" font-size="6.8" letter-spacing="0.2">vl3</text>
<text x="415.5" y="443.2" fill="#d8d8d8" font-size="6.8" letter-spacing="0.2">vl4</text>
<text x="386.5" y="459.5" fill="#d8d8d8" font-size="6.8" letter-spacing="0.2">vl5</text>
<text x="360" y="461" fill="#ff6060" font-size="6.8" letter-spacing="0.2">vl6</text>
</g>
</svg>
<!-- status bar -->
<div class="a" style="left:0;top:513.4px;width:700px;height:11.6px;background:linear-gradient(#a8a8a8 0,#a8a8a8 0.9px,#ffffff 0.9px,#ffffff 2px,#f0f0f0 2.4px,#f0f0f0 9px,#ffffff 9.4px,#ffffff 10px)"></div>
<div class="a" style="left:281px;top:516.4px;width:158px;height:6.3px;border-left:0.6px solid #9a9a9a;border-top:0.6px solid #9a9a9a"></div>
<div class="a" style="left:441.5px;top:516.4px;width:54px;height:6.3px;border-left:0.6px solid #9a9a9a;border-top:0.6px solid #9a9a9a"></div>
<div class="a" style="left:496.5px;top:516.4px;width:42.5px;height:6.3px;border-left:0.6px solid #9a9a9a;border-top:0.6px solid #9a9a9a"></div>
<div class="a" style="left:541px;top:516.4px;width:42.5px;height:6.3px;border-left:0.6px solid #9a9a9a;border-top:0.6px solid #9a9a9a"></div>
<div class="a" style="left:584.3px;top:516.4px;width:62.7px;height:6.3px;border-left:0.6px solid #9a9a9a;border-top:0.6px solid #9a9a9a"></div>
<div class="a" style="left:648px;top:516.4px;width:52px;height:6.3px;border-left:0.6px solid #9a9a9a;border-top:0.6px solid #9a9a9a"></div>
<div class="t" style="left:282px;top:518px;font-size:5.7px;color:#000;-webkit-text-stroke:0.08px #000">L0</div>
<div class="t" style="left:498px;top:518.1px;font-size:5.6px;color:#000;-webkit-text-stroke:0.08px #000">Lat -8.0</div>
<div class="t" style="left:542.5px;top:518.1px;font-size:5.6px;color:#000;-webkit-text-stroke:0.08px #000">Lon 130.0</div>
<div class="t" style="left:586px;top:518.1px;font-size:5.6px;color:#000;-webkit-text-stroke:0.08px #000">Radius 9.00</div>
<div class="t" style="left:649.5px;top:518.1px;font-size:5.6px;color:#000;-webkit-text-stroke:0.08px #000">Tilt 0.0</div>
<div class="a" style="left:0;top:523.4px;width:51.5px;height:1.6px;background:#7a8aa8"></div><div class="a" style="left:51.5px;top:523.4px;width:648.5px;height:1.6px;background:#8e8e8e"></div>
</body></html>
